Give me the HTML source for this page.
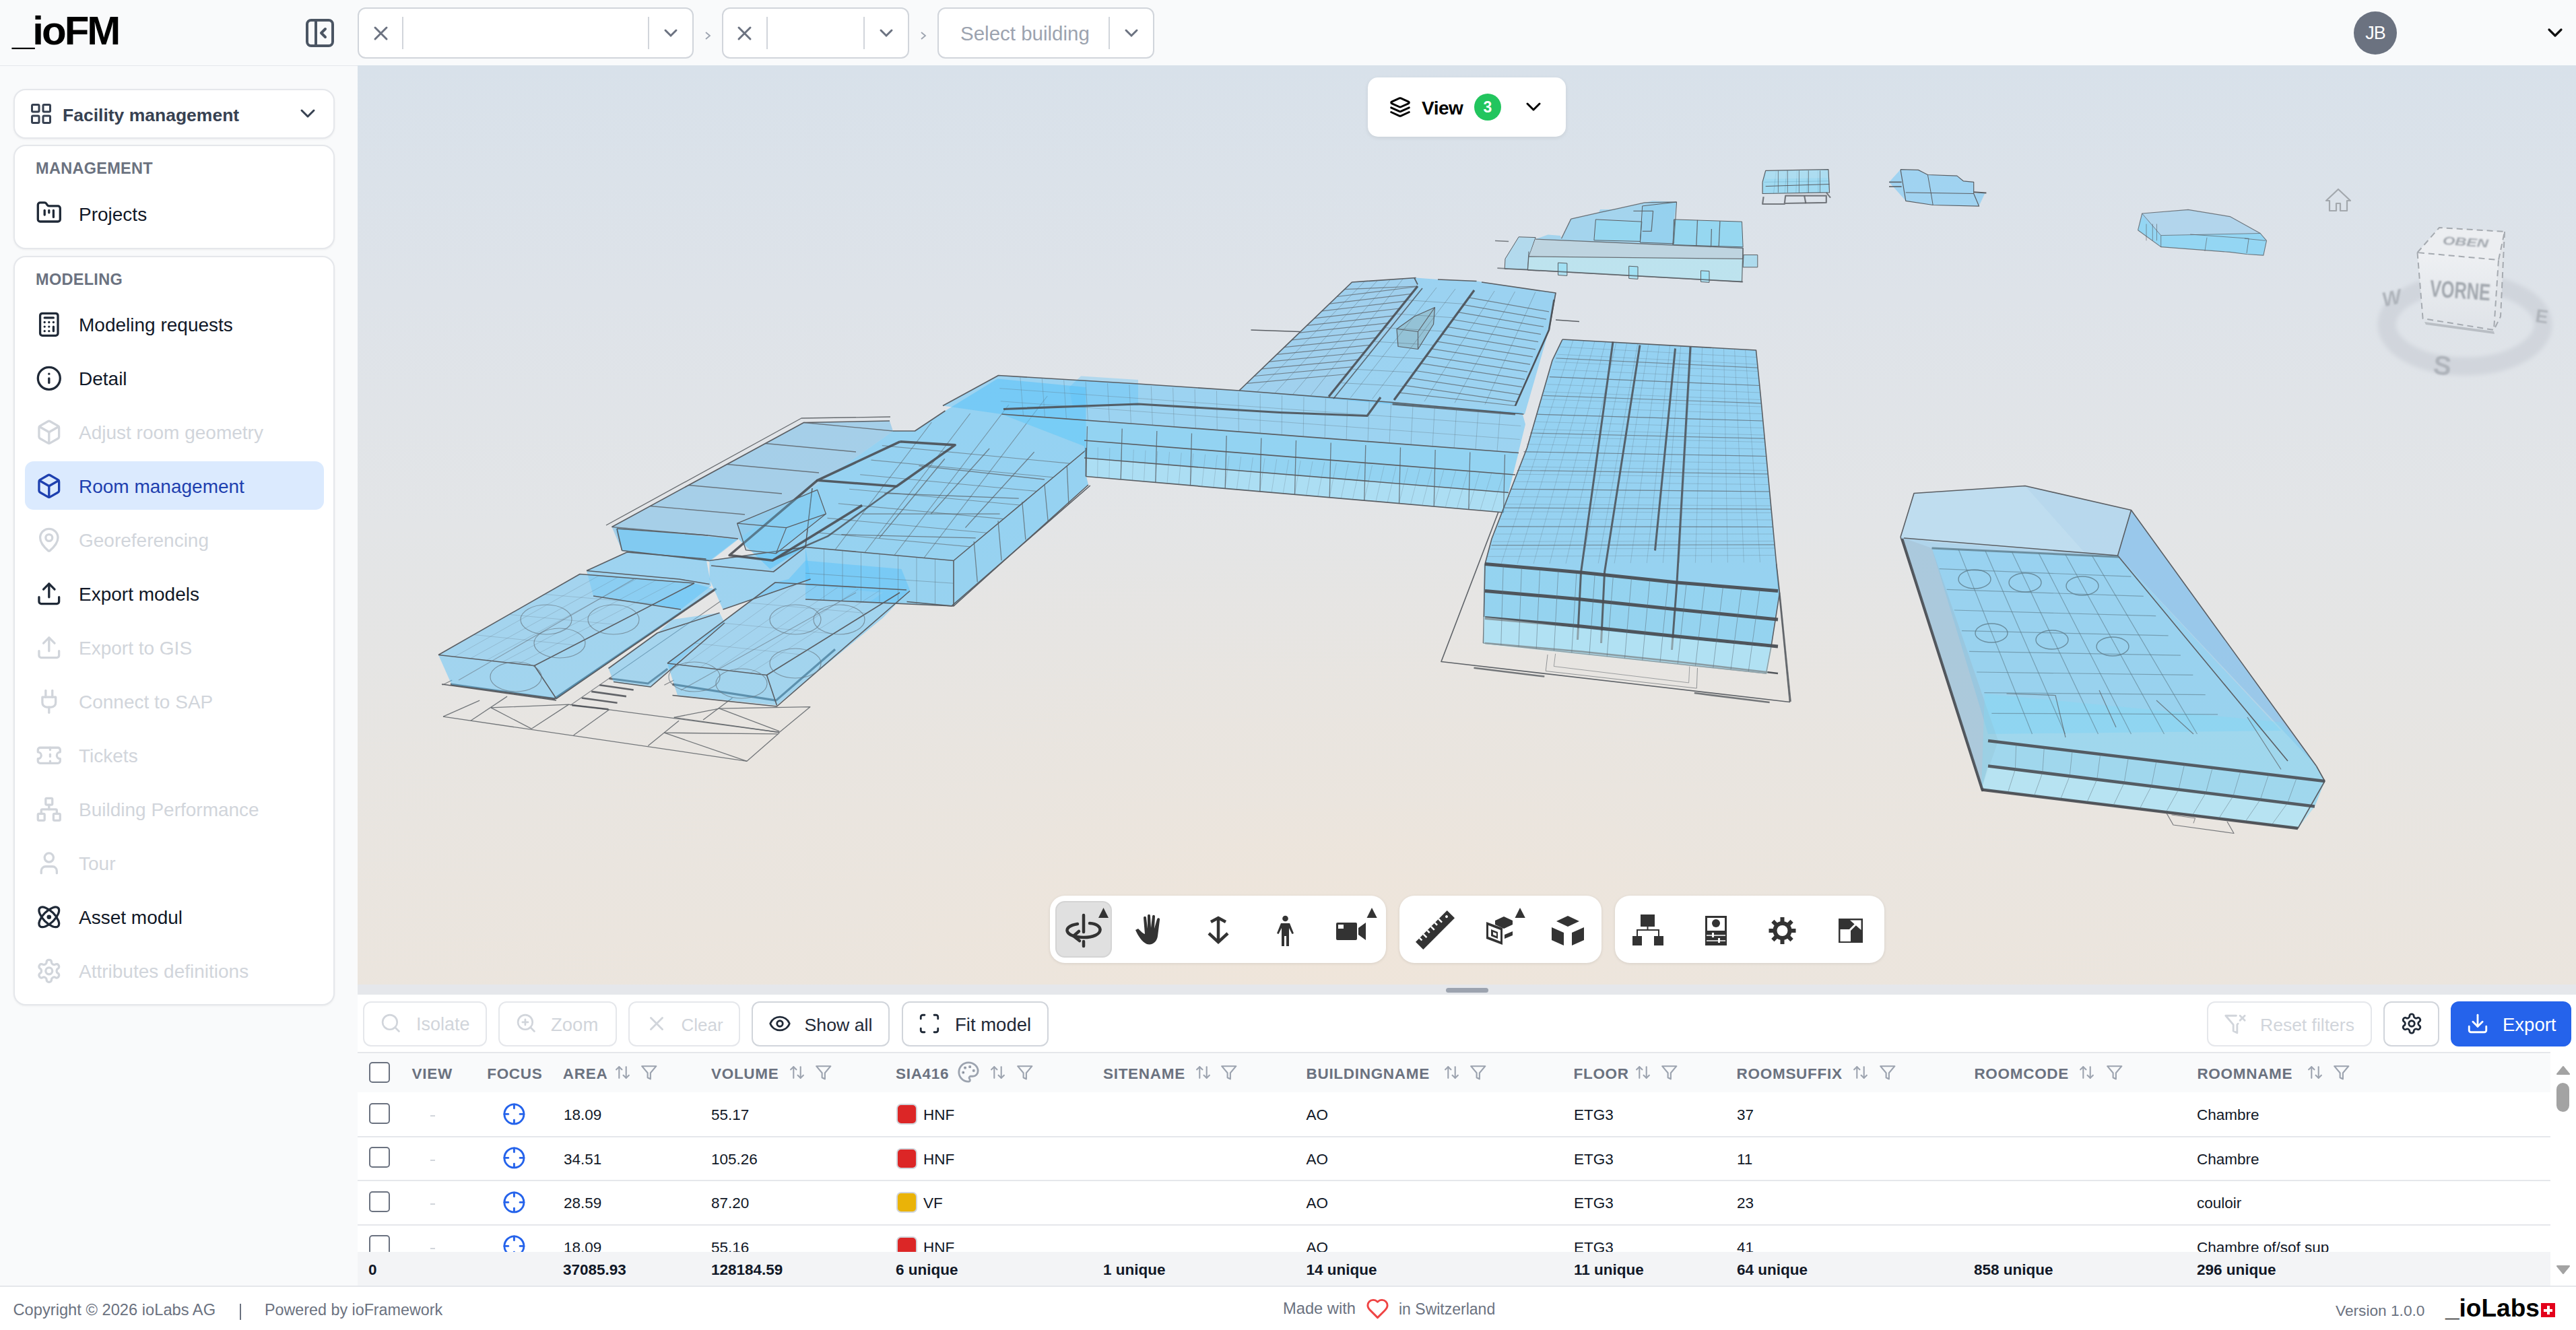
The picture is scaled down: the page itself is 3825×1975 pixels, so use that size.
<!DOCTYPE html>
<html><head><meta charset="utf-8">
<style>
*{box-sizing:border-box;margin:0;padding:0}
html,body{width:3825px;height:1975px;overflow:hidden;background:#f9fafb;font-family:"Liberation Sans",sans-serif;color:#111827}
.abs{position:absolute}
#hdr{left:0;top:0;width:3825px;height:99px;background:#f9fafb;border-bottom:2px solid #e5e7eb}
#logo{left:18px;top:16px;font-weight:700;font-size:60px;letter-spacing:-3px;color:#000;line-height:1}
.sel{position:absolute;top:11px;height:76px;background:#fff;border:2px solid #d1d5db;border-radius:12px}
.sel .x{position:absolute;top:0;height:71px;width:64px}
.sel .dv{position:absolute;top:16px;width:2px;height:40px;background:#d1d5db}
.crumb{position:absolute;top:28px;color:#9ca3af;font-size:30px}
#side{left:0;top:98px;width:531px;height:1811px;background:#f9fafb}
.card{position:absolute;left:20px;width:477px;background:#fff;border:2px solid #e5e7eb;border-radius:18px;box-shadow:0 1px 3px rgba(0,0,0,.06)}
.lbl{position:absolute;left:53px;font-size:23.5px;font-weight:700;color:#6b7280;letter-spacing:0.3px;line-height:1}
.it{position:absolute;left:117px;font-size:28px;color:#111827;line-height:1;white-space:nowrap}
.it.dis{color:#d1d5db}
.ic{position:absolute;left:50px;width:40px;height:40px}
#viewer{left:531px;top:97px;width:3294px;height:1365px;overflow:hidden;
 background:radial-gradient(ellipse 1800px 700px at 1450px 1330px,#efe5da 0%,rgba(236,229,221,0.6) 40%,rgba(230,230,230,0) 100%),linear-gradient(180deg,#d8e1ea 0%,#dee3e9 25%,#e3e5e7 50%,#e7e5e2 75%,#ebe5de 100%)}
#split{left:531px;top:1462px;width:3294px;height:15px;background:#e5e7eb}
#tbl{left:531px;top:1477px;width:3294px;height:432px;background:#fff}
#foot{left:0;top:1909px;width:3825px;height:66px;background:#fff;border-top:2px solid #e5e7eb}
.ft{position:absolute;top:20px;font-size:24px;color:#6b7280;line-height:1;white-space:nowrap}
</style></head><body>
<div id="hdr" class="abs">
 <div id="logo" class="abs">_ioFM</div>
 <svg class="abs" style="left:450px;top:24px" width="50" height="50" viewBox="0 0 50 50"><rect x="6" y="6" width="38" height="38" rx="6" fill="none" stroke="#4b5563" stroke-width="4"/><line x1="19" y1="6" x2="19" y2="44" stroke="#4b5563" stroke-width="4"/><path d="M33 19 L27 25 L33 31" fill="none" stroke="#4b5563" stroke-width="4" stroke-linecap="round" stroke-linejoin="round"/></svg>
 <div class="sel" style="left:531px;width:499px"></div>
 <div class="sel" style="left:1072px;width:278px"></div>
 <div class="sel" style="left:1392px;width:322px"></div>
 <svg class="abs" style="left:0;top:0" width="1800" height="97" viewBox="0 0 1800 97">
  <g stroke="#6b7280" stroke-width="3" stroke-linecap="round" fill="none">
   <path d="M557 41 L574 58 M574 41 L557 58"/>
   <path d="M1097 41 L1114 58 M1114 41 L1097 58"/>
   <path d="M988 45 L996 53 L1004 45"/>
   <path d="M1308 45 L1316 53 L1324 45"/>
   <path d="M1672 45 L1680 53 L1688 45"/>
  </g>
  <g fill="#d1d5db"><rect x="597" y="25" width="2" height="48"/><rect x="962" y="25" width="2" height="48"/><rect x="1138" y="25" width="2" height="48"/><rect x="1282" y="25" width="2" height="48"/><rect x="1646" y="25" width="2" height="48"/></g>
  <g stroke="#9ca3af" stroke-width="1.8" fill="none"><path d="M1048 48 L1054 53 L1048 58"/><path d="M1368 48 L1374 53 L1368 58"/></g>
 </svg>
 <div class="abs" style="left:1426px;top:35px;font-size:29.5px;color:#9ca3af;line-height:1;white-space:nowrap">Select building</div>
 <div class="abs" style="left:3495px;top:17px;width:64px;height:64px;border-radius:50%;background:#6b7280;color:#fff;font-size:27px;line-height:64px;text-align:center;letter-spacing:-1px">JB</div>
 <svg class="abs" style="left:3780px;top:40px" width="30" height="20" viewBox="0 0 30 20"><path d="M5 4 L14 13 L23 4" fill="none" stroke="#111" stroke-width="3.2" stroke-linecap="round" stroke-linejoin="round"/></svg>
</div>
<div id="side" class="abs">
<div class="card" style="top:34px;height:74px"></div>
<div class="card" style="top:117px;height:155px"></div>
<div class="card" style="top:282px;height:1113px"></div>
<div class="abs" style="left:37px;top:587px;width:444px;height:72px;border-radius:13px;background:#dbeafe"></div>
<svg class="abs" style="left:43.0px;top:53.0px" width="36" height="36" viewBox="0 0 24 24" fill="none" stroke="#374151" stroke-width="2" stroke-linecap="round" stroke-linejoin="round"><rect x="3" y="3" width="7" height="7" rx="1"/><rect x="14" y="3" width="7" height="7" rx="1"/><rect x="14" y="14" width="7" height="7" rx="1"/><rect x="3" y="14" width="7" height="7" rx="1"/></svg>
<div class="abs" style="left:93px;top:59.6px;font-size:26.5px;font-weight:700;color:#374151;line-height:1;white-space:nowrap">Facility management</div>
<svg class="abs" style="left:444px;top:59px" width="26" height="24" viewBox="0 0 26 24"><path d="M4 7 L13 16 L22 7" fill="none" stroke="#374151" stroke-width="3" stroke-linecap="round" stroke-linejoin="round"/></svg>
<div class="lbl" style="top:141.2px">MANAGEMENT</div>
<div class="lbl" style="top:305.6px">MODELING</div>
<svg class="abs" style="left:53.2px;top:198.2px" width="39.6" height="39.6" viewBox="0 0 24 24" fill="none" stroke="#1f2937" stroke-width="2" stroke-linecap="round" stroke-linejoin="round"><path d="M4 20h16a2 2 0 0 0 2-2V8a2 2 0 0 0-2-2h-7.93a2 2 0 0 1-1.66-.9l-.82-1.2A2 2 0 0 0 7.93 3H4a2 2 0 0 0-2 2v13c0 1.1.9 2 2 2Z"/><path d="M8 10v4"/><path d="M12 10v2"/><path d="M16 10v6"/></svg>
<div class="it" style="top:206.6px">Projects</div>
<svg class="abs" style="left:53.2px;top:363.5px" width="39.6" height="39.6" viewBox="0 0 24 24" fill="none" stroke="#1f2937" stroke-width="2" stroke-linecap="round" stroke-linejoin="round"><rect width="16" height="20" x="4" y="2" rx="2"/><line x1="8" x2="16" y1="6" y2="6"/><line x1="16" x2="16" y1="14" y2="18"/><path d="M16 10h.01"/><path d="M12 10h.01"/><path d="M8 10h.01"/><path d="M12 14h.01"/><path d="M8 14h.01"/><path d="M12 18h.01"/><path d="M8 18h.01"/></svg>
<div class="it" style="top:370.6px;color:#111827">Modeling requests</div>
<svg class="abs" style="left:53.2px;top:443.5px" width="39.6" height="39.6" viewBox="0 0 24 24" fill="none" stroke="#1f2937" stroke-width="2" stroke-linecap="round" stroke-linejoin="round"><circle cx="12" cy="12" r="10"/><path d="M12 16v-4"/><path d="M12 8h.01"/></svg>
<div class="it" style="top:450.6px;color:#111827">Detail</div>
<svg class="abs" style="left:53.2px;top:523.5px" width="39.6" height="39.6" viewBox="0 0 24 24" fill="none" stroke="#d1d5db" stroke-width="2" stroke-linecap="round" stroke-linejoin="round"><path d="M21 8a2 2 0 0 0-1-1.73l-7-4a2 2 0 0 0-2 0l-7 4A2 2 0 0 0 3 8v8a2 2 0 0 0 1 1.73l7 4a2 2 0 0 0 2 0l7-4A2 2 0 0 0 21 16Z"/><path d="m3.3 7 8.7 5 8.7-5"/><path d="M12 22V12"/></svg>
<div class="it" style="top:530.6px;color:#d1d5db">Adjust room geometry</div>
<svg class="abs" style="left:53.2px;top:603.5px" width="39.6" height="39.6" viewBox="0 0 24 24" fill="none" stroke="#1e40af" stroke-width="2" stroke-linecap="round" stroke-linejoin="round"><path d="M21 8a2 2 0 0 0-1-1.73l-7-4a2 2 0 0 0-2 0l-7 4A2 2 0 0 0 3 8v8a2 2 0 0 0 1 1.73l7 4a2 2 0 0 0 2 0l7-4A2 2 0 0 0 21 16Z"/><path d="m3.3 7 8.7 5 8.7-5"/><path d="M12 22V12"/></svg>
<div class="it" style="top:610.6px;color:#1e40af">Room management</div>
<svg class="abs" style="left:53.2px;top:683.5px" width="39.6" height="39.6" viewBox="0 0 24 24" fill="none" stroke="#d1d5db" stroke-width="2" stroke-linecap="round" stroke-linejoin="round"><path d="M20 10c0 4.993-5.539 10.193-7.399 11.799a1 1 0 0 1-1.202 0C9.539 20.193 4 14.993 4 10a8 8 0 0 1 16 0"/><circle cx="12" cy="10" r="3"/></svg>
<div class="it" style="top:690.6px;color:#d1d5db">Georeferencing</div>
<svg class="abs" style="left:53.2px;top:763.5px" width="39.6" height="39.6" viewBox="0 0 24 24" fill="none" stroke="#1f2937" stroke-width="2" stroke-linecap="round" stroke-linejoin="round"><path d="M21 15v4a2 2 0 0 1-2 2H5a2 2 0 0 1-2-2v-4"/><polyline points="17 8 12 3 7 8"/><line x1="12" x2="12" y1="3" y2="15"/></svg>
<div class="it" style="top:770.6px;color:#111827">Export models</div>
<svg class="abs" style="left:53.2px;top:843.5px" width="39.6" height="39.6" viewBox="0 0 24 24" fill="none" stroke="#d1d5db" stroke-width="2" stroke-linecap="round" stroke-linejoin="round"><path d="M21 15v4a2 2 0 0 1-2 2H5a2 2 0 0 1-2-2v-4"/><polyline points="17 8 12 3 7 8"/><line x1="12" x2="12" y1="3" y2="15"/></svg>
<div class="it" style="top:850.6px;color:#d1d5db">Export to GIS</div>
<svg class="abs" style="left:53.2px;top:923.5px" width="39.6" height="39.6" viewBox="0 0 24 24" fill="none" stroke="#d1d5db" stroke-width="2" stroke-linecap="round" stroke-linejoin="round"><path d="M12 22v-5"/><path d="M9 8V2"/><path d="M15 8V2"/><path d="M18 8v5a4 4 0 0 1-4 4h-4a4 4 0 0 1-4-4V8Z"/></svg>
<div class="it" style="top:930.6px;color:#d1d5db">Connect to SAP</div>
<svg class="abs" style="left:53.2px;top:1003.5px" width="39.6" height="39.6" viewBox="0 0 24 24" fill="none" stroke="#d1d5db" stroke-width="2" stroke-linecap="round" stroke-linejoin="round"><path d="M2 9a3 3 0 0 1 0 6v2a2 2 0 0 0 2 2h16a2 2 0 0 0 2-2v-2a3 3 0 0 1 0-6V7a2 2 0 0 0-2-2H4a2 2 0 0 0-2 2Z"/><path d="M13 5v2"/><path d="M13 17v2"/><path d="M13 11v2"/></svg>
<div class="it" style="top:1010.6px;color:#d1d5db">Tickets</div>
<svg class="abs" style="left:53.2px;top:1083.5px" width="39.6" height="39.6" viewBox="0 0 24 24" fill="none" stroke="#d1d5db" stroke-width="2" stroke-linecap="round" stroke-linejoin="round"><rect x="16" y="16" width="6" height="6" rx="1"/><rect x="2" y="16" width="6" height="6" rx="1"/><rect x="9" y="2" width="6" height="6" rx="1"/><path d="M5 16v-3a1 1 0 0 1 1-1h12a1 1 0 0 1 1 1v3"/><path d="M12 12V8"/></svg>
<div class="it" style="top:1090.6px;color:#d1d5db">Building Performance</div>
<svg class="abs" style="left:53.2px;top:1163.5px" width="39.6" height="39.6" viewBox="0 0 24 24" fill="none" stroke="#d1d5db" stroke-width="2" stroke-linecap="round" stroke-linejoin="round"><path d="M19 21v-2a4 4 0 0 0-4-4H9a4 4 0 0 0-4 4v2"/><circle cx="12" cy="7" r="4"/></svg>
<div class="it" style="top:1170.6px;color:#d1d5db">Tour</div>
<svg class="abs" style="left:53.2px;top:1243.5px" width="39.6" height="39.6" viewBox="0 0 24 24" fill="none" stroke="#1f2937" stroke-width="2" stroke-linecap="round" stroke-linejoin="round"><circle cx="12" cy="12" r="1"/><path d="M20.2 20.2c2.04-2.03.02-7.36-4.5-11.9-4.54-4.52-9.87-6.54-11.9-4.5-2.04 2.03-.02 7.36 4.5 11.9 4.54 4.52 9.87 6.54 11.9 4.5Z"/><path d="M15.7 15.7c4.52-4.540 6.54-9.87 4.5-11.9-2.03-2.04-7.360-.02-11.9 4.5-4.52 4.54-6.54 9.87-4.5 11.9 2.03 2.04 7.36.02 11.9-4.5Z"/></svg>
<div class="it" style="top:1250.6px;color:#111827">Asset modul</div>
<svg class="abs" style="left:53.2px;top:1323.5px" width="39.6" height="39.6" viewBox="0 0 24 24" fill="none" stroke="#d1d5db" stroke-width="2" stroke-linecap="round" stroke-linejoin="round"><path d="M12.22 2h-.44a2 2 0 0 0-2 2v.18a2 2 0 0 1-1 1.73l-.43.25a2 2 0 0 1-2 0l-.15-.08a2 2 0 0 0-2.73.73l-.22.38a2 2 0 0 0 .73 2.730l.15.1a2 2 0 0 1 1 1.72v.51a2 2 0 0 1-1 1.74l-.15.09a2 2 0 0 0-.73 2.73l.22.38a2 2 0 0 0 2.73.73l.15-.08a2 2 0 0 1 2 0l.43.25a2 2 0 0 1 1 1.73V20a2 2 0 0 0 2 2h.44a2 2 0 0 0 2-2v-.18a2 2 0 0 1 1-1.73l.43-.25a2 2 0 0 1 2 0l.15.08a2 2 0 0 0 2.73-.73l.22-.39a2 2 0 0 0-.73-2.73l-.15-.08a2 2 0 0 1-1-1.74v-.5a2 2 0 0 1 1-1.74l.15-.09a2 2 0 0 0 .73-2.73l-.22-.38a2 2 0 0 0-2.73-.73l-.15.08a2 2 0 0 1-2 0l-.43-.25a2 2 0 0 1-1-1.73V4a2 2 0 0 0-2-2z"/><circle cx="12" cy="12" r="3"/></svg>
<div class="it" style="top:1330.6px;color:#d1d5db">Attributes definitions</div>
</div>
<div id="viewer" class="abs"></div>
<!--SCENE--><div class="abs" style="left:531px;top:97px;width:3294px;height:1365px;overflow:hidden"><div class="abs" style="left:-531px;top:-97px;width:3825px;height:1975px"><svg class="abs" style="left:0;top:0" width="3825" height="1975" viewBox="0 0 3825 1975"><polyline points="658.0,1064.2 1109.1,1130.3 1157.2,1088.2" fill="none" stroke="#666a6f" stroke-width="1.3" stroke-opacity="0.9" stroke-linejoin="round"/>
<polyline points="658.0,1064.2 712.2,1040.1" fill="none" stroke="#666a6f" stroke-width="1.3" stroke-opacity="0.9" stroke-linejoin="round"/>
<polyline points="698.9,1070.2 753.1,1034.1" fill="none" stroke="#666a6f" stroke-width="1.3" stroke-opacity="0.9" stroke-linejoin="round"/>
<polyline points="729.0,1050.9 844.5,1046.1 904.6,1053.8 1157.2,1087.5" fill="none" stroke="#666a6f" stroke-width="1.3" stroke-opacity="0.9" stroke-linejoin="round"/>
<polyline points="789.1,1082.2 844.5,1046.1" fill="none" stroke="#666a6f" stroke-width="1.3" stroke-opacity="0.9" stroke-linejoin="round"/>
<polyline points="851.7,1091.8 904.6,1053.8" fill="none" stroke="#666a6f" stroke-width="1.3" stroke-opacity="0.9" stroke-linejoin="round"/>
<polyline points="962.3,1107.5 1008.1,1070.2" fill="none" stroke="#666a6f" stroke-width="1.3" stroke-opacity="0.9" stroke-linejoin="round"/>
<polyline points="729.0,1050.9 789.1,1082.2" fill="none" stroke="#666a6f" stroke-width="1.3" stroke-opacity="0.9" stroke-linejoin="round"/>
<polyline points="986.4,1088.2 1109.1,1130.3" fill="none" stroke="#666a6f" stroke-width="1.3" stroke-opacity="0.9" stroke-linejoin="round"/>
<polyline points="986.4,1088.2 1154.8,1089.9" fill="none" stroke="#666a6f" stroke-width="1.3" stroke-opacity="0.9" stroke-linejoin="round"/>
<polyline points="1000.8,1065.4 1068.2,1052.1 1202.9,1049.7 1157.2,1087.5" fill="none" stroke="#666a6f" stroke-width="1.3" stroke-opacity="0.9" stroke-linejoin="round"/>
<polyline points="1068.2,1052.1 1157.2,1085.8" fill="none" stroke="#666a6f" stroke-width="1.3" stroke-opacity="0.9" stroke-linejoin="round"/>
<polyline points="1000.8,1065.4 1157.2,1087.5" fill="none" stroke="#666a6f" stroke-width="1.3" stroke-opacity="0.9" stroke-linejoin="round"/>
<polyline points="1044.1,1069.0 1087.4,1036.5" fill="none" stroke="#666a6f" stroke-width="1.3" stroke-opacity="0.9" stroke-linejoin="round"/>
<polyline points="864.9,1036.5 864.9,1036.5" fill="none" stroke="#666a6f" stroke-width="0.1" stroke-opacity="0.0" stroke-linejoin="round"/>
<polyline points="864.9,1036.5 864.9,1036.5" fill="none" stroke="#666a6f" stroke-width="0.1" stroke-opacity="0.0" stroke-linejoin="round"/>
<polyline points="864.9,1036.5 864.9,1036.5" fill="none" stroke="#666a6f" stroke-width="0.1" stroke-opacity="0.0" stroke-linejoin="round"/>
<polyline points="864.9,1036.5 864.9,1036.5" fill="none" stroke="#666a6f" stroke-width="0.1" stroke-opacity="0.0" stroke-linejoin="round"/>
<polyline points="890.2,1017.3 940.7,1024.5" fill="none" stroke="#4a4e53" stroke-width="2.6" stroke-opacity="0.85" stroke-linejoin="round"/>
<polyline points="878.2,1026.9 929.9,1034.1" fill="none" stroke="#4a4e53" stroke-width="2.6" stroke-opacity="0.85" stroke-linejoin="round"/>
<polyline points="863.7,1036.5 916.6,1043.7" fill="none" stroke="#4a4e53" stroke-width="2.6" stroke-opacity="0.85" stroke-linejoin="round"/>
<polyline points="849.3,1047.3 903.4,1053.3" fill="none" stroke="#4a4e53" stroke-width="2.6" stroke-opacity="0.85" stroke-linejoin="round"/>
<polyline points="822.8,1037.7 1063.4,874.1" fill="none" stroke="#4a4e53" stroke-width="1.4" stroke-opacity="0.8" stroke-linejoin="round"/>
<polyline points="846.9,1047.3 1070.6,892.2" fill="none" stroke="#666a6f" stroke-width="1.1" stroke-opacity="0.8" stroke-linejoin="round"/>
<polyline points="668.9,1016.1 822.8,1037.7 1063.4,874.1" fill="none" stroke="#4a4e53" stroke-width="3.2" stroke-opacity="0.85" stroke-linejoin="round"/>
<polyline points="998.4,1016.1 1152.4,1040.1 1240.0,964.3" fill="none" stroke="#4a4e53" stroke-width="3.2" stroke-opacity="0.85" stroke-linejoin="round"/>
<polyline points="904.6,1007.6 962.3,1014.9 991.2,993.2" fill="none" stroke="#4a4e53" stroke-width="3.0" stroke-opacity="0.8" stroke-linejoin="round"/>
<polyline points="656.8,1017.3 671.3,1010.0" fill="none" stroke="#666a6f" stroke-width="1.2" stroke-opacity="0.8" stroke-linejoin="round"/>
<polyline points="986.4,1017.3 1000.8,1010.0" fill="none" stroke="#666a6f" stroke-width="1.2" stroke-opacity="0.8" stroke-linejoin="round"/>
<polyline points="2225.0,760.0 2140.0,982.5 2657.5,1042.5 2637.5,837.5" fill="none" stroke="#5f6368" stroke-width="1.6" stroke-opacity="1.0" stroke-linejoin="round"/>
<polygon points="908.5,782.5 1193.5,627.5 1321.0,625.0 1326.0,640.0 1206.0,725.0 1096.0,800.0 1053.5,832.5 923.5,817.5" fill="#74bde9" fill-opacity="0.55"/>
<polyline points="900.0,780.0 1190.0,621.0 1322.0,619.0" fill="none" stroke="#5a5e63" stroke-width="1.3" stroke-opacity="0.9" stroke-linejoin="round"/>
<polygon points="1096.0,800.0 1206.0,725.0 1326.0,640.0 1358.5,640.0 1403.5,610.0 1481.0,562.5 1612.5,575.0 1612.5,705.0 1616.0,720.0 1416.0,900.0 1196.0,890.0 1196.0,812.5 1143.5,845.0" fill="#58c2fa" fill-opacity="0.55"/>
<polygon points="1053.5,832.5 1196.0,812.5 1203.5,860.0 1146.0,880.0 1073.5,905.0 1053.5,860.0" fill="#58c2fa" fill-opacity="0.5"/>
<polygon points="913.5,784.0 1096.0,801.0 1053.5,834.0 923.5,818.5" fill="#5cc6fa" fill-opacity="0.5"/>
<polygon points="871.0,847.5 931.0,820.0 1048.5,830.0 1056.0,870.0 1011.0,905.0 881.0,885.0" fill="#58c2fa" fill-opacity="0.5"/>
<polygon points="651.0,972.5 861.0,852.5 1031.0,866.0 1061.0,875.0 826.0,1037.5 671.0,1017.5" fill="#58c2fa" fill-opacity="0.48"/>
<polygon points="651.0,972.5 861.0,852.5 1031.0,866.0 793.5,988.5" fill="#a9d3ee" fill-opacity="0.35"/>
<polygon points="903.5,992.5 976.0,940.0 998.5,920.0 1068.5,910.0 1076.0,925.0 1036.0,955.0 966.0,1020.0 911.0,1012.5" fill="#58c2fa" fill-opacity="0.45"/>
<polygon points="991.0,985.0 1151.0,865.0 1171.0,860.0 1196.0,832.5 1338.5,845.0 1351.0,876.0 1311.0,917.5 1153.5,1047.5 1006.0,1032.5" fill="#58c2fa" fill-opacity="0.48"/>
<polygon points="991.0,985.0 1151.0,865.0 1311.0,880.0 1138.5,1002.5" fill="#a9d3ee" fill-opacity="0.3"/>
<polyline points="651.0,972.5 861.0,852.5 1031.0,866.0" fill="none" stroke="#5a5e63" stroke-width="1.6" stroke-opacity="1.0" stroke-linejoin="round"/>
<polyline points="651.0,972.5 793.5,988.5 826.0,1037.5" fill="none" stroke="#5a5e63" stroke-width="1.6" stroke-opacity="1.0" stroke-linejoin="round"/>
<polyline points="671.0,1017.5 826.0,1037.5 1061.0,875.0" fill="none" stroke="#5a5e63" stroke-width="1.6" stroke-opacity="1.0" stroke-linejoin="round"/>
<polyline points="656.0,1016.0 826.0,1040.0" fill="none" stroke="#5a5e63" stroke-width="1.6" stroke-opacity="1.0" stroke-linejoin="round"/>
<polyline points="793.5,988.5 1031.0,866.0" fill="none" stroke="#5a5e63" stroke-width="1.6" stroke-opacity="1.0" stroke-linejoin="round"/>
<polyline points="991.0,985.0 1151.0,865.0 1346.0,876.0" fill="none" stroke="#5a5e63" stroke-width="1.6" stroke-opacity="1.0" stroke-linejoin="round"/>
<polyline points="991.0,985.0 1138.5,1002.5 1153.5,1047.5" fill="none" stroke="#5a5e63" stroke-width="1.6" stroke-opacity="1.0" stroke-linejoin="round"/>
<polyline points="998.5,1032.5 1153.5,1049.0 1351.0,877.5" fill="none" stroke="#5a5e63" stroke-width="1.6" stroke-opacity="1.0" stroke-linejoin="round"/>
<polyline points="1138.5,1002.5 1336.0,880.0" fill="none" stroke="#5a5e63" stroke-width="1.6" stroke-opacity="1.0" stroke-linejoin="round"/>
<polyline points="908.5,782.5 1193.5,627.5 1321.0,625.0" fill="none" stroke="#5a5e63" stroke-width="1.6" stroke-opacity="1.0" stroke-linejoin="round"/>
<polyline points="916.0,785.0 1051.0,795.0 1096.0,800.0" fill="none" stroke="#5a5e63" stroke-width="1.6" stroke-opacity="1.0" stroke-linejoin="round"/>
<polyline points="923.5,817.5 1053.5,832.5" fill="none" stroke="#5a5e63" stroke-width="1.6" stroke-opacity="1.0" stroke-linejoin="round"/>
<polyline points="916.0,785.0 923.5,817.5" fill="none" stroke="#5a5e63" stroke-width="1.6" stroke-opacity="1.0" stroke-linejoin="round"/>
<polyline points="871.0,847.5 931.0,820.0 1048.5,830.0" fill="none" stroke="#5a5e63" stroke-width="1.6" stroke-opacity="1.0" stroke-linejoin="round"/>
<polyline points="871.0,847.5 1008.5,860.0 1053.5,867.5" fill="none" stroke="#5a5e63" stroke-width="1.6" stroke-opacity="1.0" stroke-linejoin="round"/>
<polyline points="881.0,885.0 1011.0,905.0" fill="none" stroke="#5a5e63" stroke-width="1.6" stroke-opacity="1.0" stroke-linejoin="round"/>
<polyline points="903.5,992.5 976.0,940.0 1068.5,910.0" fill="none" stroke="#5a5e63" stroke-width="1.6" stroke-opacity="1.0" stroke-linejoin="round"/>
<polyline points="911.0,1012.5 966.0,1020.0 1076.0,925.0" fill="none" stroke="#5a5e63" stroke-width="1.6" stroke-opacity="1.0" stroke-linejoin="round"/>
<polyline points="1053.5,832.5 1196.0,812.5" fill="none" stroke="#5a5e63" stroke-width="1.6" stroke-opacity="1.0" stroke-linejoin="round"/>
<polyline points="1056.0,840.0 1148.5,849.0 1196.0,812.5" fill="none" stroke="#5a5e63" stroke-width="1.6" stroke-opacity="1.0" stroke-linejoin="round"/>
<polyline points="1073.5,905.0 1146.0,880.0 1203.5,860.0" fill="none" stroke="#5a5e63" stroke-width="1.6" stroke-opacity="1.0" stroke-linejoin="round"/>
<polyline points="1196.0,890.0 1416.0,900.0 1616.0,720.0" fill="none" stroke="#5a5e63" stroke-width="1.6" stroke-opacity="1.0" stroke-linejoin="round"/>
<polyline points="1196.0,812.5 1416.0,832.5 1613.5,667.5" fill="none" stroke="#5a5e63" stroke-width="1.6" stroke-opacity="1.0" stroke-linejoin="round"/>
<polyline points="1416.0,832.5 1416.0,900.0" fill="none" stroke="#5a5e63" stroke-width="1.6" stroke-opacity="1.0" stroke-linejoin="round"/>
<polyline points="1326.0,640.0 1358.5,640.0 1403.5,610.0" fill="none" stroke="#5a5e63" stroke-width="1.6" stroke-opacity="1.0" stroke-linejoin="round"/>
<polyline points="1196.0,812.5 1206.0,725.0" fill="none" stroke="#5a5e63" stroke-width="1.6" stroke-opacity="1.0" stroke-linejoin="round"/>
<polyline points="908.5,782.5 1051.0,795.0" fill="none" stroke="#5a5e63" stroke-width="1.3" stroke-opacity="0.8" stroke-linejoin="round"/>
<polyline points="965.5,751.5 1106.0,764.0" fill="none" stroke="#5a5e63" stroke-width="1.3" stroke-opacity="0.8" stroke-linejoin="round"/>
<polyline points="1022.5,720.5 1161.0,733.0" fill="none" stroke="#5a5e63" stroke-width="1.3" stroke-opacity="0.8" stroke-linejoin="round"/>
<polyline points="1079.5,689.5 1216.0,702.0" fill="none" stroke="#5a5e63" stroke-width="1.3" stroke-opacity="0.8" stroke-linejoin="round"/>
<polyline points="1136.5,658.5 1271.0,671.0" fill="none" stroke="#5a5e63" stroke-width="1.3" stroke-opacity="0.8" stroke-linejoin="round"/>
<polyline points="1193.5,627.5 1326.0,640.0" fill="none" stroke="#5a5e63" stroke-width="1.3" stroke-opacity="0.8" stroke-linejoin="round"/>
<polyline points="1212.2,790.9 1440.6,811.9" fill="none" stroke="#5a5e63" stroke-width="1.1" stroke-opacity="0.55" stroke-linejoin="round"/>
<polyline points="1228.5,769.4 1465.1,791.2" fill="none" stroke="#5a5e63" stroke-width="1.1" stroke-opacity="0.55" stroke-linejoin="round"/>
<polyline points="1244.8,747.8 1489.7,770.6" fill="none" stroke="#5a5e63" stroke-width="1.1" stroke-opacity="0.55" stroke-linejoin="round"/>
<polyline points="1261.0,726.2 1514.2,750.0" fill="none" stroke="#5a5e63" stroke-width="1.1" stroke-opacity="0.55" stroke-linejoin="round"/>
<polyline points="1277.2,704.7 1538.8,729.4" fill="none" stroke="#5a5e63" stroke-width="1.1" stroke-opacity="0.55" stroke-linejoin="round"/>
<polyline points="1293.5,683.1 1563.4,708.8" fill="none" stroke="#5a5e63" stroke-width="1.1" stroke-opacity="0.55" stroke-linejoin="round"/>
<polyline points="1309.8,661.6 1587.9,688.1" fill="none" stroke="#5a5e63" stroke-width="1.1" stroke-opacity="0.55" stroke-linejoin="round"/>
<polyline points="1240.0,816.5 1383.3,627.0" fill="none" stroke="#5a5e63" stroke-width="1.1" stroke-opacity="0.55" stroke-linejoin="round"/>
<polyline points="1284.0,820.5 1440.6,614.0" fill="none" stroke="#5a5e63" stroke-width="1.1" stroke-opacity="0.55" stroke-linejoin="round"/>
<polyline points="1328.0,824.5 1497.9,601.0" fill="none" stroke="#5a5e63" stroke-width="1.1" stroke-opacity="0.55" stroke-linejoin="round"/>
<polyline points="1372.0,828.5 1555.2,588.0" fill="none" stroke="#5a5e63" stroke-width="1.1" stroke-opacity="0.55" stroke-linejoin="round"/>
<ellipse cx="811.0" cy="920.0" rx="38" ry="22" fill="none" stroke="#6a7a86" stroke-width="1.2" stroke-opacity="0.7"/>
<ellipse cx="831.0" cy="955.0" rx="38" ry="22" fill="none" stroke="#6a7a86" stroke-width="1.2" stroke-opacity="0.7"/>
<ellipse cx="766.0" cy="1005.0" rx="38" ry="22" fill="none" stroke="#6a7a86" stroke-width="1.2" stroke-opacity="0.7"/>
<ellipse cx="1181.0" cy="920.0" rx="38" ry="22" fill="none" stroke="#6a7a86" stroke-width="1.2" stroke-opacity="0.7"/>
<ellipse cx="1246.0" cy="920.0" rx="38" ry="22" fill="none" stroke="#6a7a86" stroke-width="1.2" stroke-opacity="0.7"/>
<ellipse cx="1101.0" cy="1015.0" rx="38" ry="22" fill="none" stroke="#6a7a86" stroke-width="1.2" stroke-opacity="0.7"/>
<ellipse cx="1181.0" cy="985.0" rx="38" ry="22" fill="none" stroke="#6a7a86" stroke-width="1.2" stroke-opacity="0.7"/>
<ellipse cx="1031.0" cy="1005.0" rx="38" ry="22" fill="none" stroke="#6a7a86" stroke-width="1.2" stroke-opacity="0.7"/>
<ellipse cx="911.0" cy="920.0" rx="38" ry="22" fill="none" stroke="#6a7a86" stroke-width="1.2" stroke-opacity="0.7"/>
<polyline points="681.0,1010.0 941.0,860.0" fill="none" stroke="#6a7a86" stroke-width="1.2" stroke-opacity="0.6" stroke-linejoin="round"/>
<polyline points="1011.0,1025.0 1271.0,880.0" fill="none" stroke="#6a7a86" stroke-width="1.2" stroke-opacity="0.6" stroke-linejoin="round"/>
<polyline points="1336.3,655.8 1418.1,660.9 1331.2,722.2 1213.6,713.3 1336.3,655.8" fill="none" stroke="#4a4e53" stroke-width="3.6" stroke-opacity="0.9" stroke-linejoin="round"/>
<polyline points="1213.6,713.3 1083.2,824.5 1147.1,832.2 1280.1,750.4" fill="none" stroke="#4a4e53" stroke-width="3.6" stroke-opacity="0.9" stroke-linejoin="round"/>
<polyline points="1331.2,722.2 1228.9,796.4 1147.1,832.2" fill="none" stroke="#4a4e53" stroke-width="2.5" stroke-opacity="0.8" stroke-linejoin="round"/>
<polygon points="1094.7,777.2 1213.6,727.4 1226.4,763.1 1152.2,821.9 1107.5,816.8" fill="#66c8f5" fill-opacity="0.3" stroke="#5a5e63" stroke-width="1.3" stroke-linejoin="round"/>
<polyline points="1094.7,777.2 1167.6,783.6 1226.4,763.1" fill="none" stroke="#5a5e63" stroke-width="1.2" stroke-opacity="1.0" stroke-linejoin="round"/>
<polyline points="1167.6,783.6 1152.2,821.9" fill="none" stroke="#5a5e63" stroke-width="1.2" stroke-opacity="1.0" stroke-linejoin="round"/>
<polyline points="1364.4,691.6 1551.0,712.0" fill="none" stroke="#5a5e63" stroke-width="1.4" stroke-opacity="0.7" stroke-linejoin="round"/>
<polyline points="1313.3,732.5 1512.7,740.1" fill="none" stroke="#5a5e63" stroke-width="1.4" stroke-opacity="0.7" stroke-linejoin="round"/>
<polyline points="1280.1,763.1 1484.6,763.1" fill="none" stroke="#5a5e63" stroke-width="1.4" stroke-opacity="0.7" stroke-linejoin="round"/>
<polyline points="1249.4,793.8 1448.8,798.9" fill="none" stroke="#5a5e63" stroke-width="1.4" stroke-opacity="0.7" stroke-linejoin="round"/>
<polyline points="1469.2,666.0 1382.3,763.1" fill="none" stroke="#5a5e63" stroke-width="1.4" stroke-opacity="0.7" stroke-linejoin="round"/>
<polyline points="1535.7,671.1 1433.4,783.6" fill="none" stroke="#5a5e63" stroke-width="1.4" stroke-opacity="0.7" stroke-linejoin="round"/>
<polyline points="1402.8,681.3 1305.6,798.9" fill="none" stroke="#5a5e63" stroke-width="1.4" stroke-opacity="0.7" stroke-linejoin="round"/>
<polyline points="1446.2,804.0 1451.3,864.1" fill="none" stroke="#5a5e63" stroke-width="1.3" stroke-opacity="0.7" stroke-linejoin="round"/>
<polyline points="1482.0,773.4 1487.1,832.2" fill="none" stroke="#5a5e63" stroke-width="1.3" stroke-opacity="0.7" stroke-linejoin="round"/>
<polyline points="1517.8,745.3 1522.9,801.5" fill="none" stroke="#5a5e63" stroke-width="1.3" stroke-opacity="0.7" stroke-linejoin="round"/>
<polyline points="1551.0,719.7 1556.1,773.4" fill="none" stroke="#5a5e63" stroke-width="1.3" stroke-opacity="0.7" stroke-linejoin="round"/>
<polyline points="1584.3,691.6 1586.8,747.8" fill="none" stroke="#5a5e63" stroke-width="1.3" stroke-opacity="0.7" stroke-linejoin="round"/>
<polyline points="1346.5,893.5 1413.0,899.9 1618.8,721.0" fill="none" stroke="#5a5e63" stroke-width="1.6" stroke-opacity="1.0" stroke-linejoin="round"/>
<polygon points="1840.0,580.0 2007.5,419.0 2102.5,412.5 2135.0,415.0 2192.5,417.5 2310.0,435.0 2300.0,490.0 2264.0,615.0 2065.0,600.0" fill="#58c2fa" fill-opacity="0.5"/>
<polygon points="1840.0,580.0 2007.5,419.0 2102.5,412.5 2105.0,422.5 2090.0,465.0 1975.0,587.5" fill="#a9cfe8" fill-opacity="0.35"/>
<polygon points="1400.0,602.5 1482.5,557.5 1690.0,570.0 1840.0,580.0 2065.0,597.5 2260.0,612.5 2265.0,630.0 2232.5,761.0 1612.5,707.5 1610.0,662.5 1487.5,615.0" fill="#58c2fa" fill-opacity="0.5"/>
<polygon points="1487.5,615.0 2255.0,672.5 2232.5,760.0 1612.5,707.5 1610.0,662.5" fill="#7fd3f5" fill-opacity="0.3"/>
<polygon points="1587.5,575.0 1605.0,558.5 1690.0,564.0 1690.0,602.5 1592.5,602.5" fill="#58c2fa" fill-opacity="0.35"/>
<polygon points="1610.0,680.0 2240.0,731.5 2232.5,761.0 1612.5,707.5" fill="#d2f1f8" fill-opacity="0.4"/>
<polyline points="1400.0,602.5 1482.5,557.5 1690.0,570.0 1840.0,580.0 2067.5,597.5 2262.5,615.0" fill="none" stroke="#5a5e63" stroke-width="1.7" stroke-opacity="1.0" stroke-linejoin="round"/>
<polyline points="1487.5,615.0 1700.0,630.5 2255.0,672.5" fill="none" stroke="#5a5e63" stroke-width="1.7" stroke-opacity="1.0" stroke-linejoin="round"/>
<polyline points="1612.5,707.5 2232.5,761.0" fill="none" stroke="#5a5e63" stroke-width="1.7" stroke-opacity="1.0" stroke-linejoin="round"/>
<polyline points="1610.0,680.0 2240.0,731.5" fill="none" stroke="#5a5e63" stroke-width="1.7" stroke-opacity="1.0" stroke-linejoin="round"/>
<polyline points="1610.0,654.0 2250.0,705.0" fill="none" stroke="#5a5e63" stroke-width="1.7" stroke-opacity="1.0" stroke-linejoin="round"/>
<polyline points="1612.5,665.0 1612.5,707.5" fill="none" stroke="#5a5e63" stroke-width="1.7" stroke-opacity="1.0" stroke-linejoin="round"/>
<polyline points="1840.0,580.0 2007.5,419.0 2102.5,412.5" fill="none" stroke="#5a5e63" stroke-width="1.7" stroke-opacity="1.0" stroke-linejoin="round"/>
<polyline points="2135.0,415.0 2192.5,417.5" fill="none" stroke="#5a5e63" stroke-width="1.7" stroke-opacity="1.0" stroke-linejoin="round"/>
<polyline points="2200.0,419.0 2310.0,435.0 2300.0,490.0 2250.0,602.5" fill="none" stroke="#5a5e63" stroke-width="1.7" stroke-opacity="1.0" stroke-linejoin="round"/>
<polyline points="2100.0,412.5 2105.0,422.5" fill="none" stroke="#5a5e63" stroke-width="1.7" stroke-opacity="1.0" stroke-linejoin="round"/>
<polyline points="1857.5,490.0 1930.0,492.5" fill="none" stroke="#5a5e63" stroke-width="1.7" stroke-opacity="1.0" stroke-linejoin="round"/>
<polyline points="2310.0,475.0 2345.0,477.5" fill="none" stroke="#5a5e63" stroke-width="1.7" stroke-opacity="1.0" stroke-linejoin="round"/>
<polyline points="1614.5,633.0 1612.5,707.5" fill="none" stroke="#5a5e63" stroke-width="1.3" stroke-opacity="0.75" stroke-linejoin="round"/>
<polyline points="1666.2,636.5 1664.2,712.0" fill="none" stroke="#5a5e63" stroke-width="1.3" stroke-opacity="0.75" stroke-linejoin="round"/>
<polyline points="1717.8,640.0 1715.8,716.4" fill="none" stroke="#5a5e63" stroke-width="1.3" stroke-opacity="0.75" stroke-linejoin="round"/>
<polyline points="1769.5,643.5 1767.5,720.9" fill="none" stroke="#5a5e63" stroke-width="1.3" stroke-opacity="0.75" stroke-linejoin="round"/>
<polyline points="1821.2,647.0 1819.2,725.3" fill="none" stroke="#5a5e63" stroke-width="1.3" stroke-opacity="0.75" stroke-linejoin="round"/>
<polyline points="1872.8,650.5 1870.8,729.8" fill="none" stroke="#5a5e63" stroke-width="1.3" stroke-opacity="0.75" stroke-linejoin="round"/>
<polyline points="1924.5,654.0 1922.5,734.2" fill="none" stroke="#5a5e63" stroke-width="1.3" stroke-opacity="0.75" stroke-linejoin="round"/>
<polyline points="1976.2,657.5 1974.2,738.7" fill="none" stroke="#5a5e63" stroke-width="1.3" stroke-opacity="0.75" stroke-linejoin="round"/>
<polyline points="2027.8,661.0 2025.8,743.2" fill="none" stroke="#5a5e63" stroke-width="1.3" stroke-opacity="0.75" stroke-linejoin="round"/>
<polyline points="2079.5,664.5 2077.5,747.6" fill="none" stroke="#5a5e63" stroke-width="1.3" stroke-opacity="0.75" stroke-linejoin="round"/>
<polyline points="2131.2,668.0 2129.2,752.1" fill="none" stroke="#5a5e63" stroke-width="1.3" stroke-opacity="0.75" stroke-linejoin="round"/>
<polyline points="2182.8,671.5 2180.8,756.5" fill="none" stroke="#5a5e63" stroke-width="1.3" stroke-opacity="0.75" stroke-linejoin="round"/>
<polyline points="2234.5,675.0 2232.5,761.0" fill="none" stroke="#5a5e63" stroke-width="1.3" stroke-opacity="0.75" stroke-linejoin="round"/>
<polyline points="1490.0,607.5 1690.0,600.0 1900.0,612.5 2030.0,617.5 2050.0,590.0" fill="none" stroke="#4d5156" stroke-width="3.2" stroke-opacity="0.9" stroke-linejoin="round"/>
<polyline points="2067.5,600.0 2250.0,615.0" fill="none" stroke="#4d5156" stroke-width="3.0" stroke-opacity="0.8" stroke-linejoin="round"/>
<polyline points="1851.2,569.3 2000.6,555.5" fill="none" stroke="#5a5e63" stroke-width="1.2" stroke-opacity="0.7" stroke-linejoin="round"/>
<polyline points="1862.3,558.5 2009.2,544.7" fill="none" stroke="#5a5e63" stroke-width="1.2" stroke-opacity="0.7" stroke-linejoin="round"/>
<polyline points="1873.5,547.8 2017.9,533.9" fill="none" stroke="#5a5e63" stroke-width="1.2" stroke-opacity="0.7" stroke-linejoin="round"/>
<polyline points="1884.7,537.1 2026.6,523.0" fill="none" stroke="#5a5e63" stroke-width="1.2" stroke-opacity="0.7" stroke-linejoin="round"/>
<polyline points="1895.8,526.3 2035.2,512.2" fill="none" stroke="#5a5e63" stroke-width="1.2" stroke-opacity="0.7" stroke-linejoin="round"/>
<polyline points="1907.0,515.6 2043.9,501.4" fill="none" stroke="#5a5e63" stroke-width="1.2" stroke-opacity="0.7" stroke-linejoin="round"/>
<polyline points="1918.2,504.9 2052.6,490.5" fill="none" stroke="#5a5e63" stroke-width="1.2" stroke-opacity="0.7" stroke-linejoin="round"/>
<polyline points="1929.3,494.1 2061.2,479.7" fill="none" stroke="#5a5e63" stroke-width="1.2" stroke-opacity="0.7" stroke-linejoin="round"/>
<polyline points="1940.5,483.4 2069.9,468.9" fill="none" stroke="#5a5e63" stroke-width="1.2" stroke-opacity="0.7" stroke-linejoin="round"/>
<polyline points="1951.7,472.7 2078.6,458.0" fill="none" stroke="#5a5e63" stroke-width="1.2" stroke-opacity="0.7" stroke-linejoin="round"/>
<polyline points="1962.8,461.9 2087.2,447.2" fill="none" stroke="#5a5e63" stroke-width="1.2" stroke-opacity="0.7" stroke-linejoin="round"/>
<polyline points="1974.0,451.2 2095.9,436.4" fill="none" stroke="#5a5e63" stroke-width="1.2" stroke-opacity="0.7" stroke-linejoin="round"/>
<polyline points="1985.2,440.5 2104.6,425.5" fill="none" stroke="#5a5e63" stroke-width="1.2" stroke-opacity="0.7" stroke-linejoin="round"/>
<polyline points="1996.3,429.7 2105.0,425.0" fill="none" stroke="#5a5e63" stroke-width="1.2" stroke-opacity="0.7" stroke-linejoin="round"/>
<polyline points="2077.9,583.1 2250.0,602.5" fill="none" stroke="#5a5e63" stroke-width="1.2" stroke-opacity="0.7" stroke-linejoin="round"/>
<polyline points="2085.9,572.3 2252.0,596.9" fill="none" stroke="#5a5e63" stroke-width="1.2" stroke-opacity="0.7" stroke-linejoin="round"/>
<polyline points="2093.8,561.4 2256.0,585.8" fill="none" stroke="#5a5e63" stroke-width="1.2" stroke-opacity="0.7" stroke-linejoin="round"/>
<polyline points="2101.7,550.5 2260.0,574.6" fill="none" stroke="#5a5e63" stroke-width="1.2" stroke-opacity="0.7" stroke-linejoin="round"/>
<polyline points="2109.7,539.7 2264.0,563.4" fill="none" stroke="#5a5e63" stroke-width="1.2" stroke-opacity="0.7" stroke-linejoin="round"/>
<polyline points="2117.6,528.8 2268.0,552.2" fill="none" stroke="#5a5e63" stroke-width="1.2" stroke-opacity="0.7" stroke-linejoin="round"/>
<polyline points="2125.5,517.9 2272.0,541.1" fill="none" stroke="#5a5e63" stroke-width="1.2" stroke-opacity="0.7" stroke-linejoin="round"/>
<polyline points="2133.5,507.1 2276.0,529.9" fill="none" stroke="#5a5e63" stroke-width="1.2" stroke-opacity="0.7" stroke-linejoin="round"/>
<polyline points="2141.4,496.2 2280.0,518.8" fill="none" stroke="#5a5e63" stroke-width="1.2" stroke-opacity="0.7" stroke-linejoin="round"/>
<polyline points="2149.3,485.3 2284.0,507.6" fill="none" stroke="#5a5e63" stroke-width="1.2" stroke-opacity="0.7" stroke-linejoin="round"/>
<polyline points="2157.3,474.5 2288.0,496.4" fill="none" stroke="#5a5e63" stroke-width="1.2" stroke-opacity="0.7" stroke-linejoin="round"/>
<polyline points="2165.2,463.6 2292.0,485.2" fill="none" stroke="#5a5e63" stroke-width="1.2" stroke-opacity="0.7" stroke-linejoin="round"/>
<polyline points="2173.1,452.7 2296.0,474.1" fill="none" stroke="#5a5e63" stroke-width="1.2" stroke-opacity="0.7" stroke-linejoin="round"/>
<polyline points="2181.1,441.9 2300.0,462.9" fill="none" stroke="#5a5e63" stroke-width="1.2" stroke-opacity="0.7" stroke-linejoin="round"/>
<polyline points="1973.0,589.0 2105.0,425.0" fill="none" stroke="#4a4e53" stroke-width="3.2" stroke-opacity="0.9" stroke-linejoin="round"/>
<polyline points="1980.0,592.0 2112.0,428.0" fill="none" stroke="#4a4e53" stroke-width="1.6" stroke-opacity="0.8" stroke-linejoin="round"/>
<polyline points="2070.0,594.0 2189.0,431.0" fill="none" stroke="#4a4e53" stroke-width="3.2" stroke-opacity="0.9" stroke-linejoin="round"/>
<polyline points="2250.0,602.5 2300.0,490.0 2307.5,445.0" fill="none" stroke="#4a4e53" stroke-width="2.6" stroke-opacity="0.85" stroke-linejoin="round"/>
<polygon points="2074.0,488.5 2100.0,470.0 2130.5,456.5 2128.5,481.5 2105.5,518.5 2076.0,514.5" fill="#8fb8c4" fill-opacity="0.6" stroke="#5a5e63" stroke-width="1.2" stroke-linejoin="round"/>
<polyline points="2074.0,488.5 2105.5,492.5 2130.5,456.5" fill="none" stroke="#5a5e63" stroke-width="1.1" stroke-opacity="1.0" stroke-linejoin="round"/>
<polyline points="2105.5,492.5 2105.5,518.5" fill="none" stroke="#5a5e63" stroke-width="1.1" stroke-opacity="1.0" stroke-linejoin="round"/>
<polygon points="2318.5,354.3 2332.7,325.1 2373.6,315.9 2376.1,310.9 2397.0,310.9 2442.1,300.9 2453.7,298.3 2489.6,300.0 2485.5,325.9 2586.5,329.2 2588.1,368.5 2280.1,355.1 2298.5,348.4 2316.8,350.1" fill="#6cc6f2" fill-opacity="0.5"/>
<polygon points="2369.4,325.9 2437.9,329.2 2435.4,358.4 2366.9,356.8" fill="#7fdcf7" fill-opacity="0.35" stroke="#5a5e63" stroke-width="1.0" stroke-linejoin="round"/>
<polygon points="2438.7,305.9 2489.6,300.0 2485.5,361.8 2435.4,360.1" fill="#6cc6f2" fill-opacity="0.25" stroke="#5a5e63" stroke-width="1.0" stroke-linejoin="round"/>
<polygon points="2485.5,325.9 2586.5,329.2 2588.1,366.8 2484.6,363.5" fill="#7fdcf7" fill-opacity="0.35" stroke="#5a5e63" stroke-width="1.0" stroke-linejoin="round"/>
<polygon points="2235.0,384.3 2255.1,351.8 2280.1,352.6 2270.1,381.0 2268.4,400.2 2234.2,399.3" fill="#7fcff2" fill-opacity="0.45" stroke="#5a5e63" stroke-width="1.0" stroke-linejoin="round"/>
<polygon points="2280.1,355.1 2588.1,368.5 2588.1,384.3 2270.1,381.0" fill="#b3cfdc" fill-opacity="0.75"/>
<polygon points="2270.1,381.0 2588.1,384.3 2586.5,418.5 2268.4,401.0" fill="#a9e2f2" fill-opacity="0.6"/>
<polygon points="2589.0,378.5 2609.8,378.5 2609.8,396.8 2588.1,396.8" fill="#7fd3f2" fill-opacity="0.5" stroke="#5a5e63" stroke-width="1.0" stroke-linejoin="round"/>
<polyline points="2280.1,355.1 2588.1,368.5 2588.1,384.3" fill="none" stroke="#5a5e63" stroke-width="1.3" stroke-opacity="0.85" stroke-linejoin="round"/>
<polyline points="2270.1,381.0 2588.1,384.3" fill="none" stroke="#5a5e63" stroke-width="1.3" stroke-opacity="0.85" stroke-linejoin="round"/>
<polyline points="2268.4,401.0 2586.5,418.5 2588.1,368.5" fill="none" stroke="#5a5e63" stroke-width="1.3" stroke-opacity="0.85" stroke-linejoin="round"/>
<polyline points="2270.1,373.5 2268.4,401.0" fill="none" stroke="#5a5e63" stroke-width="1.3" stroke-opacity="0.85" stroke-linejoin="round"/>
<polyline points="2487.1,325.9 2483.8,363.5" fill="none" stroke="#5a5e63" stroke-width="1.3" stroke-opacity="0.85" stroke-linejoin="round"/>
<polyline points="2520.5,326.7 2518.8,365.1" fill="none" stroke="#5a5e63" stroke-width="1.3" stroke-opacity="0.85" stroke-linejoin="round"/>
<polyline points="2553.9,328.4 2552.2,366.0" fill="none" stroke="#5a5e63" stroke-width="1.3" stroke-opacity="0.85" stroke-linejoin="round"/>
<polyline points="2541.4,340.1 2540.6,366.0" fill="none" stroke="#5a5e63" stroke-width="1.3" stroke-opacity="0.85" stroke-linejoin="round"/>
<polyline points="2332.7,325.1 2373.6,315.9 2397.0,310.9 2442.1,300.9 2489.6,300.0" fill="none" stroke="#5a5e63" stroke-width="1.3" stroke-opacity="0.85" stroke-linejoin="round"/>
<polyline points="2425.4,313.4 2454.6,313.4 2452.1,343.4 2438.7,343.4" fill="none" stroke="#5a5e63" stroke-width="1.3" stroke-opacity="0.85" stroke-linejoin="round"/>
<polyline points="2318.5,354.3 2332.7,325.1" fill="none" stroke="#5a5e63" stroke-width="1.3" stroke-opacity="0.85" stroke-linejoin="round"/>
<polygon points="2313.5,390.2 2326.9,391.0 2326.9,409.4 2313.5,408.5" fill="#8fe0f8" fill-opacity="0.6" stroke="#5a5e63" stroke-width="1.0" stroke-linejoin="round"/>
<polygon points="2418.7,395.2 2432.0,396.0 2432.0,414.4 2418.7,413.5" fill="#8fe0f8" fill-opacity="0.6" stroke="#5a5e63" stroke-width="1.0" stroke-linejoin="round"/>
<polygon points="2525.5,401.9 2538.0,402.7 2538.0,419.4 2525.5,418.5" fill="#8fe0f8" fill-opacity="0.6" stroke="#5a5e63" stroke-width="1.0" stroke-linejoin="round"/>
<polyline points="2223.4,398.2 2588.1,418.5" fill="none" stroke="#555a5f" stroke-width="1.8" stroke-opacity="0.7" stroke-linejoin="round"/>
<polyline points="2220.0,357.6 2240.1,358.4" fill="none" stroke="#5a5e63" stroke-width="1.5" stroke-opacity="0.8" stroke-linejoin="round"/>
<polygon points="2320.0,504.0 2607.5,520.0 2615.0,595.0 2637.5,835.0 2642.5,880.0 2630.0,960.0 2622.5,1000.0 2202.5,955.0 2205.0,837.5 2215.0,800.0 2267.5,665.0 2305.0,535.0" fill="#58c2fa" fill-opacity="0.55"/>
<polygon points="2202.5,837.5 2640.0,880.0 2622.5,1000.0 2202.5,955.0" fill="#8fd8f2" fill-opacity="0.35"/>
<polyline points="2320.0,504.0 2607.5,520.0 2615.0,595.0 2637.5,835.0 2642.5,880.0" fill="none" stroke="#5a5e63" stroke-width="1.6" stroke-opacity="1.0" stroke-linejoin="round"/>
<polyline points="2320.0,504.0 2305.0,535.0 2267.5,665.0 2215.0,800.0 2205.0,837.5 2202.5,955.0" fill="none" stroke="#5a5e63" stroke-width="1.6" stroke-opacity="1.0" stroke-linejoin="round"/>
<polyline points="2202.5,955.0 2622.5,1000.0 2630.0,960.0 2642.5,880.0" fill="none" stroke="#5a5e63" stroke-width="1.6" stroke-opacity="1.0" stroke-linejoin="round"/>
<polyline points="2205.0,837.5 2347.5,850.0 2490.0,865.0 2640.0,877.5" fill="none" stroke="#4a4e53" stroke-width="5" stroke-opacity="0.95" stroke-linejoin="round"/>
<polyline points="2205.0,877.5 2347.5,890.0 2490.0,905.0 2640.0,920.0" fill="none" stroke="#4a4e53" stroke-width="5" stroke-opacity="0.95" stroke-linejoin="round"/>
<polyline points="2205.0,917.5 2347.5,930.0 2490.0,945.0 2640.0,960.0" fill="none" stroke="#4a4e53" stroke-width="5" stroke-opacity="0.95" stroke-linejoin="round"/>
<polyline points="2205.0,955.0 2347.5,967.5 2490.0,982.5 2640.0,1000.0" fill="none" stroke="#4a4e53" stroke-width="2.5" stroke-opacity="0.95" stroke-linejoin="round"/>
<polyline points="2395.0,507.5 2347.5,850.0 2342.5,950.0" fill="none" stroke="#4a4e53" stroke-width="3" stroke-opacity="0.85" stroke-linejoin="round"/>
<polyline points="2435.0,512.5 2382.5,850.0 2377.5,955.0" fill="none" stroke="#4a4e53" stroke-width="3" stroke-opacity="0.85" stroke-linejoin="round"/>
<polyline points="2510.0,515.0 2490.0,865.0 2482.5,965.0" fill="none" stroke="#4a4e53" stroke-width="3" stroke-opacity="0.85" stroke-linejoin="round"/>
<polyline points="2487.5,517.5 2457.5,817.5" fill="none" stroke="#4a4e53" stroke-width="3" stroke-opacity="0.85" stroke-linejoin="round"/>
<polyline points="2310.4,531.8 2610.0,546.2" fill="none" stroke="#5a5e63" stroke-width="1.2" stroke-opacity="0.6" stroke-linejoin="round"/>
<polyline points="2300.8,559.6 2612.5,572.5" fill="none" stroke="#5a5e63" stroke-width="1.2" stroke-opacity="0.6" stroke-linejoin="round"/>
<polyline points="2291.2,587.4 2615.0,598.8" fill="none" stroke="#5a5e63" stroke-width="1.2" stroke-opacity="0.6" stroke-linejoin="round"/>
<polyline points="2281.7,615.2 2617.5,625.0" fill="none" stroke="#5a5e63" stroke-width="1.2" stroke-opacity="0.6" stroke-linejoin="round"/>
<polyline points="2272.1,643.0 2620.0,651.2" fill="none" stroke="#5a5e63" stroke-width="1.2" stroke-opacity="0.6" stroke-linejoin="round"/>
<polyline points="2262.5,670.8 2622.5,677.5" fill="none" stroke="#5a5e63" stroke-width="1.2" stroke-opacity="0.6" stroke-linejoin="round"/>
<polyline points="2252.9,698.5 2625.0,703.8" fill="none" stroke="#5a5e63" stroke-width="1.2" stroke-opacity="0.6" stroke-linejoin="round"/>
<polyline points="2243.3,726.3 2627.5,730.0" fill="none" stroke="#5a5e63" stroke-width="1.2" stroke-opacity="0.6" stroke-linejoin="round"/>
<polyline points="2233.8,754.1 2630.0,756.2" fill="none" stroke="#5a5e63" stroke-width="1.2" stroke-opacity="0.6" stroke-linejoin="round"/>
<polyline points="2224.2,781.9 2632.5,782.5" fill="none" stroke="#5a5e63" stroke-width="1.2" stroke-opacity="0.6" stroke-linejoin="round"/>
<polyline points="2214.6,809.7 2635.0,808.8" fill="none" stroke="#5a5e63" stroke-width="1.2" stroke-opacity="0.6" stroke-linejoin="round"/>
<polygon points="2202.5,916.1 2342.3,932.4 2484.3,947.6 2631.1,961.5 2624.1,1001.1 2202.5,956.9" fill="#d2f1f8" fill-opacity="0.45"/>
<polyline points="2298.0,972.0 2295.2,996.5 2519.3,1022.1 2520.5,991.8" fill="none" stroke="#6b7075" stroke-width="1.0" stroke-opacity="0.7" stroke-linejoin="round"/>
<polyline points="2309.6,970.8 2307.3,989.5 2507.6,1013.9 2508.8,989.5" fill="none" stroke="#6b7075" stroke-width="1.0" stroke-opacity="0.6" stroke-linejoin="round"/>
<polyline points="2188.5,991.8 2293.3,1004.6" fill="none" stroke="#555a5f" stroke-width="2.5" stroke-opacity="0.8" stroke-linejoin="round"/>
<polyline points="2515.8,1029.1 2627.6,1043.1" fill="none" stroke="#555a5f" stroke-width="2.5" stroke-opacity="0.8" stroke-linejoin="round"/>
<polyline points="2642.7,880.0 2659.0,1041.9" fill="none" stroke="#555a5f" stroke-width="1.6" stroke-opacity="0.9" stroke-linejoin="round"/>
<polygon points="2822.0,797.5 2842.0,732.5 3007.0,721.5 3164.5,757.5 3439.5,1137.5 3452.0,1160.0 3437.0,1197.5 3412.0,1230.0 2942.0,1172.5" fill="#7cc3ef" fill-opacity="0.5"/>
<polygon points="2822.0,797.5 2842.0,732.5 3007.0,721.5 3164.5,757.5 3144.5,825.0 2869.5,805.0" fill="#cfe6f3" fill-opacity="0.5"/>
<polygon points="3007.0,721.5 3164.5,757.5 3144.5,825.0 3097.0,822.5" fill="#a9cde8" fill-opacity="0.3"/>
<polygon points="2868.5,814.0 3146.0,827.0 3387.0,1085.0 2952.0,1090.0" fill="#62cdfb" fill-opacity="0.3"/>
<polygon points="2822.0,797.5 2868.5,814.0 2967.0,1100.0 2942.0,1172.5" fill="#9aa9b3" fill-opacity="0.25"/>
<polygon points="3164.5,757.5 3439.5,1137.5 3144.5,825.0" fill="#6fb3ea" fill-opacity="0.35"/>
<polygon points="2947.0,1030.0 3387.0,1072.5 3439.5,1137.5 3452.0,1160.0 3437.0,1197.5 3412.0,1230.0 2942.0,1172.5" fill="#7fdcf7" fill-opacity="0.35"/>
<polygon points="2952.0,1137.5 3437.0,1197.5 3412.0,1230.0 2942.0,1172.5" fill="#d2f1f8" fill-opacity="0.45"/>
<polyline points="2822.0,797.5 2842.0,732.5 3007.0,721.5 3164.5,757.5 3439.5,1137.5" fill="none" stroke="#5a5e63" stroke-width="1.6" stroke-opacity="1.0" stroke-linejoin="round"/>
<polyline points="2827.0,799.0 3144.5,825.0 3164.5,757.5" fill="none" stroke="#5a5e63" stroke-width="1.6" stroke-opacity="1.0" stroke-linejoin="round"/>
<polyline points="3144.5,825.0 3397.0,1130.0" fill="none" stroke="#5a5e63" stroke-width="1.6" stroke-opacity="1.0" stroke-linejoin="round"/>
<polyline points="2822.0,797.5 2942.0,1172.5 3412.0,1230.0 3452.0,1160.0 3439.5,1137.5" fill="none" stroke="#5a5e63" stroke-width="1.6" stroke-opacity="1.0" stroke-linejoin="round"/>
<polyline points="2952.0,1100.0 3452.0,1160.0" fill="none" stroke="#4a4e53" stroke-width="4.5" stroke-opacity="0.9" stroke-linejoin="round"/>
<polyline points="2952.0,1137.5 3437.0,1197.5" fill="none" stroke="#4a4e53" stroke-width="4.5" stroke-opacity="0.9" stroke-linejoin="round"/>
<polyline points="2942.0,1172.5 3412.0,1230.0" fill="none" stroke="#4a4e53" stroke-width="4.5" stroke-opacity="0.9" stroke-linejoin="round"/>
<polyline points="2824.5,800.0 2944.5,1175.0" fill="none" stroke="#4a4e53" stroke-width="3.5" stroke-opacity="0.9" stroke-linejoin="round"/>
<polyline points="2908.1,815.9 3017.5,1090.0" fill="none" stroke="#5e7d8c" stroke-width="1.2" stroke-opacity="0.6" stroke-linejoin="round"/>
<polyline points="2947.8,817.7 3066.5,1090.0" fill="none" stroke="#5e7d8c" stroke-width="1.2" stroke-opacity="0.6" stroke-linejoin="round"/>
<polyline points="2987.4,819.6 3115.5,1090.0" fill="none" stroke="#5e7d8c" stroke-width="1.2" stroke-opacity="0.6" stroke-linejoin="round"/>
<polyline points="3027.1,821.4 3164.5,1090.0" fill="none" stroke="#5e7d8c" stroke-width="1.2" stroke-opacity="0.6" stroke-linejoin="round"/>
<polyline points="3066.7,823.3 3213.5,1090.0" fill="none" stroke="#5e7d8c" stroke-width="1.2" stroke-opacity="0.6" stroke-linejoin="round"/>
<polyline points="3106.4,825.1 3262.5,1090.0" fill="none" stroke="#5e7d8c" stroke-width="1.2" stroke-opacity="0.6" stroke-linejoin="round"/>
<polyline points="2879.6,844.7 3164.4,856.2" fill="none" stroke="#5e7d8c" stroke-width="1.2" stroke-opacity="0.6" stroke-linejoin="round"/>
<polyline points="2890.7,875.3 3182.8,885.4" fill="none" stroke="#5e7d8c" stroke-width="1.2" stroke-opacity="0.6" stroke-linejoin="round"/>
<polyline points="2901.8,906.0 3201.2,914.7" fill="none" stroke="#5e7d8c" stroke-width="1.2" stroke-opacity="0.6" stroke-linejoin="round"/>
<polyline points="2912.9,936.7 3219.6,943.9" fill="none" stroke="#5e7d8c" stroke-width="1.2" stroke-opacity="0.6" stroke-linejoin="round"/>
<polyline points="2924.1,967.3 3237.9,973.1" fill="none" stroke="#5e7d8c" stroke-width="1.2" stroke-opacity="0.6" stroke-linejoin="round"/>
<polyline points="2935.2,998.0 3256.3,1002.3" fill="none" stroke="#5e7d8c" stroke-width="1.2" stroke-opacity="0.6" stroke-linejoin="round"/>
<polyline points="2946.3,1028.7 3274.7,1031.6" fill="none" stroke="#5e7d8c" stroke-width="1.2" stroke-opacity="0.6" stroke-linejoin="round"/>
<polyline points="2957.4,1059.3 3293.1,1060.8" fill="none" stroke="#5e7d8c" stroke-width="1.2" stroke-opacity="0.6" stroke-linejoin="round"/>
<polyline points="2868.5,814.0 3146.0,827.0" fill="none" stroke="#5e7d8c" stroke-width="3" stroke-opacity="0.8" stroke-linejoin="round"/>
<ellipse cx="3007.0" cy="865.0" rx="24" ry="14" fill="none" stroke="#5e7d8c" stroke-width="1.4" stroke-opacity="0.8"/>
<ellipse cx="3047.0" cy="950.0" rx="24" ry="14" fill="none" stroke="#5e7d8c" stroke-width="1.4" stroke-opacity="0.8"/>
<ellipse cx="2932.0" cy="860.0" rx="24" ry="14" fill="none" stroke="#5e7d8c" stroke-width="1.4" stroke-opacity="0.8"/>
<ellipse cx="2957.0" cy="940.0" rx="24" ry="14" fill="none" stroke="#5e7d8c" stroke-width="1.4" stroke-opacity="0.8"/>
<ellipse cx="3092.0" cy="870.0" rx="24" ry="14" fill="none" stroke="#5e7d8c" stroke-width="1.4" stroke-opacity="0.8"/>
<ellipse cx="3137.0" cy="960.0" rx="24" ry="14" fill="none" stroke="#5e7d8c" stroke-width="1.4" stroke-opacity="0.8"/>
<polyline points="3217.0,1207.5 3227.0,1225.0 3317.0,1237.5 3307.0,1220.0" fill="none" stroke="#5a5e63" stroke-width="1.2" stroke-opacity="0.8" stroke-linejoin="round"/>
<polyline points="3224.5,1210.0 3259.5,1215.0 3257.0,1222.5" fill="none" stroke="#5a5e63" stroke-width="1.0" stroke-opacity="0.7" stroke-linejoin="round"/>
<polyline points="2979.5,1030.0 3052.0,1032.5 3067.0,1095.0" fill="none" stroke="#5a5e63" stroke-width="1.2" stroke-opacity="0.7" stroke-linejoin="round"/>
<polyline points="3117.0,1025.0 3142.0,1080.0" fill="none" stroke="#5a5e63" stroke-width="1.2" stroke-opacity="0.7" stroke-linejoin="round"/>
<polyline points="3202.0,1040.0 3257.0,1090.0" fill="none" stroke="#5a5e63" stroke-width="1.2" stroke-opacity="0.7" stroke-linejoin="round"/>
<polyline points="3337.0,1065.0 3387.0,1142.5" fill="none" stroke="#5a5e63" stroke-width="1.2" stroke-opacity="0.7" stroke-linejoin="round"/>
<polyline points="2336.0,504.9 2229.0,837.4" fill="none" stroke="#5a6a75" stroke-width="0.9" stroke-opacity="0.28" stroke-linejoin="round"/>
<polyline points="2351.9,505.8 2253.1,837.2" fill="none" stroke="#5a6a75" stroke-width="0.9" stroke-opacity="0.28" stroke-linejoin="round"/>
<polyline points="2367.9,506.7 2277.1,837.1" fill="none" stroke="#5a6a75" stroke-width="0.9" stroke-opacity="0.28" stroke-linejoin="round"/>
<polyline points="2383.9,507.6 2301.1,836.9" fill="none" stroke="#5a6a75" stroke-width="0.9" stroke-opacity="0.28" stroke-linejoin="round"/>
<polyline points="2399.9,508.4 2325.1,836.8" fill="none" stroke="#5a6a75" stroke-width="0.9" stroke-opacity="0.28" stroke-linejoin="round"/>
<polyline points="2415.8,509.3 2349.2,836.7" fill="none" stroke="#5a6a75" stroke-width="0.9" stroke-opacity="0.28" stroke-linejoin="round"/>
<polyline points="2431.8,510.2 2373.2,836.5" fill="none" stroke="#5a6a75" stroke-width="0.9" stroke-opacity="0.28" stroke-linejoin="round"/>
<polyline points="2447.8,511.1 2397.2,836.4" fill="none" stroke="#5a6a75" stroke-width="0.9" stroke-opacity="0.28" stroke-linejoin="round"/>
<polyline points="2463.8,512.0 2421.2,836.2" fill="none" stroke="#5a6a75" stroke-width="0.9" stroke-opacity="0.28" stroke-linejoin="round"/>
<polyline points="2479.7,512.9 2445.3,836.1" fill="none" stroke="#5a6a75" stroke-width="0.9" stroke-opacity="0.28" stroke-linejoin="round"/>
<polyline points="2495.7,513.8 2469.3,836.0" fill="none" stroke="#5a6a75" stroke-width="0.9" stroke-opacity="0.28" stroke-linejoin="round"/>
<polyline points="2511.7,514.7 2493.3,835.8" fill="none" stroke="#5a6a75" stroke-width="0.9" stroke-opacity="0.28" stroke-linejoin="round"/>
<polyline points="2527.6,515.6 2517.4,835.7" fill="none" stroke="#5a6a75" stroke-width="0.9" stroke-opacity="0.28" stroke-linejoin="round"/>
<polyline points="2543.6,516.4 2541.4,835.6" fill="none" stroke="#5a6a75" stroke-width="0.9" stroke-opacity="0.28" stroke-linejoin="round"/>
<polyline points="2559.6,517.3 2565.4,835.4" fill="none" stroke="#5a6a75" stroke-width="0.9" stroke-opacity="0.28" stroke-linejoin="round"/>
<polyline points="2575.6,518.2 2589.4,835.3" fill="none" stroke="#5a6a75" stroke-width="0.9" stroke-opacity="0.28" stroke-linejoin="round"/>
<polyline points="2591.5,519.1 2613.5,835.1" fill="none" stroke="#5a6a75" stroke-width="0.9" stroke-opacity="0.28" stroke-linejoin="round"/>
<polyline points="2316.2,515.1 2608.5,530.5" fill="none" stroke="#5a6a75" stroke-width="0.9" stroke-opacity="0.28" stroke-linejoin="round"/>
<polyline points="2312.3,526.2 2609.5,541.0" fill="none" stroke="#5a6a75" stroke-width="0.9" stroke-opacity="0.28" stroke-linejoin="round"/>
<polyline points="2308.5,537.4 2610.5,551.5" fill="none" stroke="#5a6a75" stroke-width="0.9" stroke-opacity="0.28" stroke-linejoin="round"/>
<polyline points="2304.7,548.5 2611.5,562.0" fill="none" stroke="#5a6a75" stroke-width="0.9" stroke-opacity="0.28" stroke-linejoin="round"/>
<polyline points="2300.8,559.6 2612.5,572.5" fill="none" stroke="#5a6a75" stroke-width="0.9" stroke-opacity="0.28" stroke-linejoin="round"/>
<polyline points="2297.0,570.7 2613.5,583.0" fill="none" stroke="#5a6a75" stroke-width="0.9" stroke-opacity="0.28" stroke-linejoin="round"/>
<polyline points="2293.2,581.8 2614.5,593.5" fill="none" stroke="#5a6a75" stroke-width="0.9" stroke-opacity="0.28" stroke-linejoin="round"/>
<polyline points="2289.3,592.9 2615.5,604.0" fill="none" stroke="#5a6a75" stroke-width="0.9" stroke-opacity="0.28" stroke-linejoin="round"/>
<polyline points="2285.5,604.0 2616.5,614.5" fill="none" stroke="#5a6a75" stroke-width="0.9" stroke-opacity="0.28" stroke-linejoin="round"/>
<polyline points="2281.7,615.2 2617.5,625.0" fill="none" stroke="#5a6a75" stroke-width="0.9" stroke-opacity="0.28" stroke-linejoin="round"/>
<polyline points="2277.8,626.3 2618.5,635.5" fill="none" stroke="#5a6a75" stroke-width="0.9" stroke-opacity="0.28" stroke-linejoin="round"/>
<polyline points="2274.0,637.4 2619.5,646.0" fill="none" stroke="#5a6a75" stroke-width="0.9" stroke-opacity="0.28" stroke-linejoin="round"/>
<polyline points="2270.2,648.5 2620.5,656.5" fill="none" stroke="#5a6a75" stroke-width="0.9" stroke-opacity="0.28" stroke-linejoin="round"/>
<polyline points="2266.3,659.6 2621.5,667.0" fill="none" stroke="#5a6a75" stroke-width="0.9" stroke-opacity="0.28" stroke-linejoin="round"/>
<polyline points="2262.5,670.8 2622.5,677.5" fill="none" stroke="#5a6a75" stroke-width="0.9" stroke-opacity="0.28" stroke-linejoin="round"/>
<polyline points="2258.7,681.9 2623.5,688.0" fill="none" stroke="#5a6a75" stroke-width="0.9" stroke-opacity="0.28" stroke-linejoin="round"/>
<polyline points="2254.8,693.0 2624.5,698.5" fill="none" stroke="#5a6a75" stroke-width="0.9" stroke-opacity="0.28" stroke-linejoin="round"/>
<polyline points="2251.0,704.1 2625.5,709.0" fill="none" stroke="#5a6a75" stroke-width="0.9" stroke-opacity="0.28" stroke-linejoin="round"/>
<polyline points="2247.2,715.2 2626.5,719.5" fill="none" stroke="#5a6a75" stroke-width="0.9" stroke-opacity="0.28" stroke-linejoin="round"/>
<polyline points="2243.3,726.3 2627.5,730.0" fill="none" stroke="#5a6a75" stroke-width="0.9" stroke-opacity="0.28" stroke-linejoin="round"/>
<polyline points="2239.5,737.5 2628.5,740.5" fill="none" stroke="#5a6a75" stroke-width="0.9" stroke-opacity="0.28" stroke-linejoin="round"/>
<polyline points="2235.7,748.6 2629.5,751.0" fill="none" stroke="#5a6a75" stroke-width="0.9" stroke-opacity="0.28" stroke-linejoin="round"/>
<polyline points="2231.8,759.7 2630.5,761.5" fill="none" stroke="#5a6a75" stroke-width="0.9" stroke-opacity="0.28" stroke-linejoin="round"/>
<polyline points="2228.0,770.8 2631.5,772.0" fill="none" stroke="#5a6a75" stroke-width="0.9" stroke-opacity="0.28" stroke-linejoin="round"/>
<polyline points="2224.2,781.9 2632.5,782.5" fill="none" stroke="#5a6a75" stroke-width="0.9" stroke-opacity="0.28" stroke-linejoin="round"/>
<polyline points="2220.3,793.0 2633.5,793.0" fill="none" stroke="#5a6a75" stroke-width="0.9" stroke-opacity="0.28" stroke-linejoin="round"/>
<polyline points="2216.5,804.2 2634.5,803.5" fill="none" stroke="#5a6a75" stroke-width="0.9" stroke-opacity="0.28" stroke-linejoin="round"/>
<polyline points="2212.7,815.3 2635.5,814.0" fill="none" stroke="#5a6a75" stroke-width="0.9" stroke-opacity="0.28" stroke-linejoin="round"/>
<polyline points="2208.8,826.4 2636.5,824.5" fill="none" stroke="#5a6a75" stroke-width="0.9" stroke-opacity="0.28" stroke-linejoin="round"/>
<polyline points="2232.2,840.2 2228.8,957.8" fill="none" stroke="#5a6a75" stroke-width="1.0" stroke-opacity="0.5" stroke-linejoin="round"/>
<polyline points="2259.4,842.8 2255.0,960.6" fill="none" stroke="#5a6a75" stroke-width="1.0" stroke-opacity="0.5" stroke-linejoin="round"/>
<polyline points="2286.6,845.5 2281.2,963.4" fill="none" stroke="#5a6a75" stroke-width="1.0" stroke-opacity="0.5" stroke-linejoin="round"/>
<polyline points="2313.8,848.1 2307.5,966.2" fill="none" stroke="#5a6a75" stroke-width="1.0" stroke-opacity="0.5" stroke-linejoin="round"/>
<polyline points="2340.9,850.8 2333.8,969.1" fill="none" stroke="#5a6a75" stroke-width="1.0" stroke-opacity="0.5" stroke-linejoin="round"/>
<polyline points="2368.1,853.4 2360.0,971.9" fill="none" stroke="#5a6a75" stroke-width="1.0" stroke-opacity="0.5" stroke-linejoin="round"/>
<polyline points="2395.3,856.1 2386.2,974.7" fill="none" stroke="#5a6a75" stroke-width="1.0" stroke-opacity="0.5" stroke-linejoin="round"/>
<polyline points="2422.5,858.8 2412.5,977.5" fill="none" stroke="#5a6a75" stroke-width="1.0" stroke-opacity="0.5" stroke-linejoin="round"/>
<polyline points="2449.7,861.4 2438.8,980.3" fill="none" stroke="#5a6a75" stroke-width="1.0" stroke-opacity="0.5" stroke-linejoin="round"/>
<polyline points="2476.9,864.1 2465.0,983.1" fill="none" stroke="#5a6a75" stroke-width="1.0" stroke-opacity="0.5" stroke-linejoin="round"/>
<polyline points="2504.1,866.7 2491.2,985.9" fill="none" stroke="#5a6a75" stroke-width="1.0" stroke-opacity="0.5" stroke-linejoin="round"/>
<polyline points="2531.2,869.4 2517.5,988.8" fill="none" stroke="#5a6a75" stroke-width="1.0" stroke-opacity="0.5" stroke-linejoin="round"/>
<polyline points="2558.4,872.0 2543.8,991.6" fill="none" stroke="#5a6a75" stroke-width="1.0" stroke-opacity="0.5" stroke-linejoin="round"/>
<polyline points="2585.6,874.7 2570.0,994.4" fill="none" stroke="#5a6a75" stroke-width="1.0" stroke-opacity="0.5" stroke-linejoin="round"/>
<polyline points="2612.8,877.3 2596.2,997.2" fill="none" stroke="#5a6a75" stroke-width="1.0" stroke-opacity="0.5" stroke-linejoin="round"/>
<polyline points="1514.9,559.8 1519.5,617.4" fill="none" stroke="#5a6a75" stroke-width="0.9" stroke-opacity="0.35" stroke-linejoin="round"/>
<polyline points="1547.3,562.1 1551.5,619.8" fill="none" stroke="#5a6a75" stroke-width="0.9" stroke-opacity="0.35" stroke-linejoin="round"/>
<polyline points="1579.7,564.4 1583.4,622.2" fill="none" stroke="#5a6a75" stroke-width="0.9" stroke-opacity="0.35" stroke-linejoin="round"/>
<polyline points="1612.1,566.7 1615.4,624.6" fill="none" stroke="#5a6a75" stroke-width="0.9" stroke-opacity="0.35" stroke-linejoin="round"/>
<polyline points="1644.5,569.0 1647.4,627.0" fill="none" stroke="#5a6a75" stroke-width="0.9" stroke-opacity="0.35" stroke-linejoin="round"/>
<polyline points="1676.9,571.2 1679.4,629.4" fill="none" stroke="#5a6a75" stroke-width="0.9" stroke-opacity="0.35" stroke-linejoin="round"/>
<polyline points="1709.3,573.5 1711.4,631.8" fill="none" stroke="#5a6a75" stroke-width="0.9" stroke-opacity="0.35" stroke-linejoin="round"/>
<polyline points="1741.7,575.8 1743.3,634.2" fill="none" stroke="#5a6a75" stroke-width="0.9" stroke-opacity="0.35" stroke-linejoin="round"/>
<polyline points="1774.1,578.1 1775.3,636.6" fill="none" stroke="#5a6a75" stroke-width="0.9" stroke-opacity="0.35" stroke-linejoin="round"/>
<polyline points="1806.5,580.4 1807.3,639.0" fill="none" stroke="#5a6a75" stroke-width="0.9" stroke-opacity="0.35" stroke-linejoin="round"/>
<polyline points="1838.9,582.7 1839.3,641.4" fill="none" stroke="#5a6a75" stroke-width="0.9" stroke-opacity="0.35" stroke-linejoin="round"/>
<polyline points="1871.2,585.0 1871.2,643.8" fill="none" stroke="#5a6a75" stroke-width="0.9" stroke-opacity="0.35" stroke-linejoin="round"/>
<polyline points="1903.6,587.3 1903.2,646.1" fill="none" stroke="#5a6a75" stroke-width="0.9" stroke-opacity="0.35" stroke-linejoin="round"/>
<polyline points="1936.0,589.6 1935.2,648.5" fill="none" stroke="#5a6a75" stroke-width="0.9" stroke-opacity="0.35" stroke-linejoin="round"/>
<polyline points="1968.4,591.9 1967.2,650.9" fill="none" stroke="#5a6a75" stroke-width="0.9" stroke-opacity="0.35" stroke-linejoin="round"/>
<polyline points="2000.8,594.2 1999.2,653.3" fill="none" stroke="#5a6a75" stroke-width="0.9" stroke-opacity="0.35" stroke-linejoin="round"/>
<polyline points="2033.2,596.5 2031.1,655.7" fill="none" stroke="#5a6a75" stroke-width="0.9" stroke-opacity="0.35" stroke-linejoin="round"/>
<polyline points="2065.6,598.8 2063.1,658.1" fill="none" stroke="#5a6a75" stroke-width="0.9" stroke-opacity="0.35" stroke-linejoin="round"/>
<polyline points="2098.0,601.0 2095.1,660.5" fill="none" stroke="#5a6a75" stroke-width="0.9" stroke-opacity="0.35" stroke-linejoin="round"/>
<polyline points="2130.4,603.3 2127.1,662.9" fill="none" stroke="#5a6a75" stroke-width="0.9" stroke-opacity="0.35" stroke-linejoin="round"/>
<polyline points="2162.8,605.6 2159.1,665.3" fill="none" stroke="#5a6a75" stroke-width="0.9" stroke-opacity="0.35" stroke-linejoin="round"/>
<polyline points="2195.2,607.9 2191.0,667.7" fill="none" stroke="#5a6a75" stroke-width="0.9" stroke-opacity="0.35" stroke-linejoin="round"/>
<polyline points="2227.6,610.2 2223.0,670.1" fill="none" stroke="#5a6a75" stroke-width="0.9" stroke-opacity="0.35" stroke-linejoin="round"/>
<polyline points="1484.2,576.7 2258.3,632.5" fill="none" stroke="#5a6a75" stroke-width="0.9" stroke-opacity="0.35" stroke-linejoin="round"/>
<polyline points="1485.8,595.8 2256.7,652.5" fill="none" stroke="#5a6a75" stroke-width="0.9" stroke-opacity="0.35" stroke-linejoin="round"/>
<polyline points="1630.2,664.2 1629.7,709.0" fill="none" stroke="#5a6a75" stroke-width="0.8" stroke-opacity="0.3" stroke-linejoin="round"/>
<polyline points="1647.9,665.3 1646.9,710.4" fill="none" stroke="#5a6a75" stroke-width="0.8" stroke-opacity="0.3" stroke-linejoin="round"/>
<polyline points="1665.6,666.5 1664.2,711.9" fill="none" stroke="#5a6a75" stroke-width="0.8" stroke-opacity="0.3" stroke-linejoin="round"/>
<polyline points="1683.3,667.7 1681.4,713.3" fill="none" stroke="#5a6a75" stroke-width="0.8" stroke-opacity="0.3" stroke-linejoin="round"/>
<polyline points="1701.0,668.8 1698.6,714.8" fill="none" stroke="#5a6a75" stroke-width="0.8" stroke-opacity="0.3" stroke-linejoin="round"/>
<polyline points="1718.8,670.0 1715.8,716.2" fill="none" stroke="#5a6a75" stroke-width="0.8" stroke-opacity="0.3" stroke-linejoin="round"/>
<polyline points="1736.5,671.2 1733.1,717.7" fill="none" stroke="#5a6a75" stroke-width="0.8" stroke-opacity="0.3" stroke-linejoin="round"/>
<polyline points="1754.2,672.3 1750.3,719.2" fill="none" stroke="#5a6a75" stroke-width="0.8" stroke-opacity="0.3" stroke-linejoin="round"/>
<polyline points="1771.9,673.5 1767.5,720.6" fill="none" stroke="#5a6a75" stroke-width="0.8" stroke-opacity="0.3" stroke-linejoin="round"/>
<polyline points="1789.6,674.7 1784.7,722.1" fill="none" stroke="#5a6a75" stroke-width="0.8" stroke-opacity="0.3" stroke-linejoin="round"/>
<polyline points="1807.3,675.8 1801.9,723.5" fill="none" stroke="#5a6a75" stroke-width="0.8" stroke-opacity="0.3" stroke-linejoin="round"/>
<polyline points="1825.0,677.0 1819.2,725.0" fill="none" stroke="#5a6a75" stroke-width="0.8" stroke-opacity="0.3" stroke-linejoin="round"/>
<polyline points="1842.7,678.2 1836.4,726.5" fill="none" stroke="#5a6a75" stroke-width="0.8" stroke-opacity="0.3" stroke-linejoin="round"/>
<polyline points="1860.4,679.3 1853.6,727.9" fill="none" stroke="#5a6a75" stroke-width="0.8" stroke-opacity="0.3" stroke-linejoin="round"/>
<polyline points="1878.1,680.5 1870.8,729.4" fill="none" stroke="#5a6a75" stroke-width="0.8" stroke-opacity="0.3" stroke-linejoin="round"/>
<polyline points="1895.8,681.7 1888.1,730.8" fill="none" stroke="#5a6a75" stroke-width="0.8" stroke-opacity="0.3" stroke-linejoin="round"/>
<polyline points="1913.5,682.8 1905.3,732.3" fill="none" stroke="#5a6a75" stroke-width="0.8" stroke-opacity="0.3" stroke-linejoin="round"/>
<polyline points="1931.2,684.0 1922.5,733.8" fill="none" stroke="#5a6a75" stroke-width="0.8" stroke-opacity="0.3" stroke-linejoin="round"/>
<polyline points="1949.0,685.2 1939.7,735.2" fill="none" stroke="#5a6a75" stroke-width="0.8" stroke-opacity="0.3" stroke-linejoin="round"/>
<polyline points="1966.7,686.3 1956.9,736.7" fill="none" stroke="#5a6a75" stroke-width="0.8" stroke-opacity="0.3" stroke-linejoin="round"/>
<polyline points="1984.4,687.5 1974.2,738.1" fill="none" stroke="#5a6a75" stroke-width="0.8" stroke-opacity="0.3" stroke-linejoin="round"/>
<polyline points="2002.1,688.7 1991.4,739.6" fill="none" stroke="#5a6a75" stroke-width="0.8" stroke-opacity="0.3" stroke-linejoin="round"/>
<polyline points="2019.8,689.8 2008.6,741.0" fill="none" stroke="#5a6a75" stroke-width="0.8" stroke-opacity="0.3" stroke-linejoin="round"/>
<polyline points="2037.5,691.0 2025.8,742.5" fill="none" stroke="#5a6a75" stroke-width="0.8" stroke-opacity="0.3" stroke-linejoin="round"/>
<polyline points="2055.2,692.2 2043.1,744.0" fill="none" stroke="#5a6a75" stroke-width="0.8" stroke-opacity="0.3" stroke-linejoin="round"/>
<polyline points="2072.9,693.3 2060.3,745.4" fill="none" stroke="#5a6a75" stroke-width="0.8" stroke-opacity="0.3" stroke-linejoin="round"/>
<polyline points="2090.6,694.5 2077.5,746.9" fill="none" stroke="#5a6a75" stroke-width="0.8" stroke-opacity="0.3" stroke-linejoin="round"/>
<polyline points="2108.3,695.7 2094.7,748.3" fill="none" stroke="#5a6a75" stroke-width="0.8" stroke-opacity="0.3" stroke-linejoin="round"/>
<polyline points="2126.0,696.8 2111.9,749.8" fill="none" stroke="#5a6a75" stroke-width="0.8" stroke-opacity="0.3" stroke-linejoin="round"/>
<polyline points="2143.8,698.0 2129.2,751.2" fill="none" stroke="#5a6a75" stroke-width="0.8" stroke-opacity="0.3" stroke-linejoin="round"/>
<polyline points="2161.5,699.2 2146.4,752.7" fill="none" stroke="#5a6a75" stroke-width="0.8" stroke-opacity="0.3" stroke-linejoin="round"/>
<polyline points="2179.2,700.3 2163.6,754.2" fill="none" stroke="#5a6a75" stroke-width="0.8" stroke-opacity="0.3" stroke-linejoin="round"/>
<polyline points="2196.9,701.5 2180.8,755.6" fill="none" stroke="#5a6a75" stroke-width="0.8" stroke-opacity="0.3" stroke-linejoin="round"/>
<polyline points="2214.6,702.7 2198.1,757.1" fill="none" stroke="#5a6a75" stroke-width="0.8" stroke-opacity="0.3" stroke-linejoin="round"/>
<polyline points="2232.3,703.8 2215.3,758.5" fill="none" stroke="#5a6a75" stroke-width="0.8" stroke-opacity="0.3" stroke-linejoin="round"/>
<polyline points="2026.5,417.7 1866.6,581.8" fill="none" stroke="#5a6a75" stroke-width="0.9" stroke-opacity="0.45" stroke-linejoin="round"/>
<polyline points="2045.5,416.4 1893.2,583.6" fill="none" stroke="#5a6a75" stroke-width="0.9" stroke-opacity="0.45" stroke-linejoin="round"/>
<polyline points="2064.5,415.1 1919.8,585.4" fill="none" stroke="#5a6a75" stroke-width="0.9" stroke-opacity="0.45" stroke-linejoin="round"/>
<polyline points="2083.5,413.8 1946.4,587.2" fill="none" stroke="#5a6a75" stroke-width="0.9" stroke-opacity="0.45" stroke-linejoin="round"/>
<polyline points="2219.2,432.0 2115.0,596.1" fill="none" stroke="#5a6a75" stroke-width="0.9" stroke-opacity="0.45" stroke-linejoin="round"/>
<polyline points="2249.5,433.0 2160.0,598.2" fill="none" stroke="#5a6a75" stroke-width="0.9" stroke-opacity="0.45" stroke-linejoin="round"/>
<polyline points="2279.8,434.0 2205.0,600.4" fill="none" stroke="#5a6a75" stroke-width="0.9" stroke-opacity="0.45" stroke-linejoin="round"/>
<polyline points="2133.0,427.0 2005.3,590.7" fill="none" stroke="#5a6a75" stroke-width="0.9" stroke-opacity="0.45" stroke-linejoin="round"/>
<polyline points="2161.0,429.0 2037.7,592.3" fill="none" stroke="#5a6a75" stroke-width="0.9" stroke-opacity="0.45" stroke-linejoin="round"/>
<polyline points="2088.5,445.5 2174.1,451.4" fill="none" stroke="#5a6a75" stroke-width="0.9" stroke-opacity="0.45" stroke-linejoin="round"/>
<polyline points="2072.0,466.0 2159.2,471.8" fill="none" stroke="#5a6a75" stroke-width="0.9" stroke-opacity="0.45" stroke-linejoin="round"/>
<polyline points="2055.5,486.5 2144.4,492.1" fill="none" stroke="#5a6a75" stroke-width="0.9" stroke-opacity="0.45" stroke-linejoin="round"/>
<polyline points="2039.0,507.0 2129.5,512.5" fill="none" stroke="#5a6a75" stroke-width="0.9" stroke-opacity="0.45" stroke-linejoin="round"/>
<polyline points="2022.5,527.5 2114.6,532.9" fill="none" stroke="#5a6a75" stroke-width="0.9" stroke-opacity="0.45" stroke-linejoin="round"/>
<polyline points="2006.0,548.0 2099.8,553.2" fill="none" stroke="#5a6a75" stroke-width="0.9" stroke-opacity="0.45" stroke-linejoin="round"/>
<polyline points="1989.5,568.5 2084.9,573.6" fill="none" stroke="#5a6a75" stroke-width="0.9" stroke-opacity="0.45" stroke-linejoin="round"/>
<polyline points="1223.5,815.0 1223.5,891.2" fill="none" stroke="#5a6a75" stroke-width="0.9" stroke-opacity="0.45" stroke-linejoin="round"/>
<polyline points="1251.0,817.5 1251.0,892.5" fill="none" stroke="#5a6a75" stroke-width="0.9" stroke-opacity="0.45" stroke-linejoin="round"/>
<polyline points="1278.5,820.0 1278.5,893.8" fill="none" stroke="#5a6a75" stroke-width="0.9" stroke-opacity="0.45" stroke-linejoin="round"/>
<polyline points="1306.0,822.5 1306.0,895.0" fill="none" stroke="#5a6a75" stroke-width="0.9" stroke-opacity="0.45" stroke-linejoin="round"/>
<polyline points="1333.5,825.0 1333.5,896.2" fill="none" stroke="#5a6a75" stroke-width="0.9" stroke-opacity="0.45" stroke-linejoin="round"/>
<polyline points="1361.0,827.5 1361.0,897.5" fill="none" stroke="#5a6a75" stroke-width="0.9" stroke-opacity="0.45" stroke-linejoin="round"/>
<polyline points="1388.5,830.0 1388.5,898.8" fill="none" stroke="#5a6a75" stroke-width="0.9" stroke-opacity="0.45" stroke-linejoin="round"/>
<polyline points="1196.0,851.2 1416.0,866.2" fill="none" stroke="#5a6a75" stroke-width="0.9" stroke-opacity="0.45" stroke-linejoin="round"/>
<polyline points="889.3,854.8 674.8,975.2" fill="none" stroke="#5a6a75" stroke-width="0.8" stroke-opacity="0.3" stroke-linejoin="round"/>
<polyline points="917.7,857.0 698.5,977.8" fill="none" stroke="#5a6a75" stroke-width="0.8" stroke-opacity="0.3" stroke-linejoin="round"/>
<polyline points="946.0,859.2 722.2,980.5" fill="none" stroke="#5a6a75" stroke-width="0.8" stroke-opacity="0.3" stroke-linejoin="round"/>
<polyline points="974.3,861.5 746.0,983.2" fill="none" stroke="#5a6a75" stroke-width="0.8" stroke-opacity="0.3" stroke-linejoin="round"/>
<polyline points="1002.7,863.8 769.8,985.8" fill="none" stroke="#5a6a75" stroke-width="0.8" stroke-opacity="0.3" stroke-linejoin="round"/>
<polyline points="808.5,882.5 971.6,896.6" fill="none" stroke="#5a6a75" stroke-width="0.8" stroke-opacity="0.3" stroke-linejoin="round"/>
<polyline points="756.0,912.5 912.2,927.2" fill="none" stroke="#5a6a75" stroke-width="0.8" stroke-opacity="0.3" stroke-linejoin="round"/>
<polyline points="703.5,942.5 852.9,957.9" fill="none" stroke="#5a6a75" stroke-width="0.8" stroke-opacity="0.3" stroke-linejoin="round"/>
<polyline points="1181.8,867.5 1015.6,987.9" fill="none" stroke="#5a6a75" stroke-width="0.8" stroke-opacity="0.3" stroke-linejoin="round"/>
<polyline points="1212.7,870.0 1040.2,990.8" fill="none" stroke="#5a6a75" stroke-width="0.8" stroke-opacity="0.3" stroke-linejoin="round"/>
<polyline points="1243.5,872.5 1064.8,993.8" fill="none" stroke="#5a6a75" stroke-width="0.8" stroke-opacity="0.3" stroke-linejoin="round"/>
<polyline points="1274.3,875.0 1089.3,996.7" fill="none" stroke="#5a6a75" stroke-width="0.8" stroke-opacity="0.3" stroke-linejoin="round"/>
<polyline points="1305.2,877.5 1113.9,999.6" fill="none" stroke="#5a6a75" stroke-width="0.8" stroke-opacity="0.3" stroke-linejoin="round"/>
<polyline points="1111.0,895.0 1286.6,910.6" fill="none" stroke="#5a6a75" stroke-width="0.8" stroke-opacity="0.3" stroke-linejoin="round"/>
<polyline points="1071.0,925.0 1237.2,941.2" fill="none" stroke="#5a6a75" stroke-width="0.8" stroke-opacity="0.3" stroke-linejoin="round"/>
<polyline points="1031.0,955.0 1187.9,971.9" fill="none" stroke="#5a6a75" stroke-width="0.8" stroke-opacity="0.3" stroke-linejoin="round"/>
<polyline points="2993.7,1105.0 2992.4,1142.5" fill="none" stroke="#5a6a75" stroke-width="1.0" stroke-opacity="0.45" stroke-linejoin="round"/>
<polyline points="3035.3,1110.0 3032.8,1147.5" fill="none" stroke="#5a6a75" stroke-width="1.0" stroke-opacity="0.45" stroke-linejoin="round"/>
<polyline points="3077.0,1115.0 3073.2,1152.5" fill="none" stroke="#5a6a75" stroke-width="1.0" stroke-opacity="0.45" stroke-linejoin="round"/>
<polyline points="3118.7,1120.0 3113.7,1157.5" fill="none" stroke="#5a6a75" stroke-width="1.0" stroke-opacity="0.45" stroke-linejoin="round"/>
<polyline points="3160.3,1125.0 3154.1,1162.5" fill="none" stroke="#5a6a75" stroke-width="1.0" stroke-opacity="0.45" stroke-linejoin="round"/>
<polyline points="3202.0,1130.0 3194.5,1167.5" fill="none" stroke="#5a6a75" stroke-width="1.0" stroke-opacity="0.45" stroke-linejoin="round"/>
<polyline points="3243.7,1135.0 3234.9,1172.5" fill="none" stroke="#5a6a75" stroke-width="1.0" stroke-opacity="0.45" stroke-linejoin="round"/>
<polyline points="3285.3,1140.0 3275.3,1177.5" fill="none" stroke="#5a6a75" stroke-width="1.0" stroke-opacity="0.45" stroke-linejoin="round"/>
<polyline points="3327.0,1145.0 3315.8,1182.5" fill="none" stroke="#5a6a75" stroke-width="1.0" stroke-opacity="0.45" stroke-linejoin="round"/>
<polyline points="3368.7,1150.0 3356.2,1187.5" fill="none" stroke="#5a6a75" stroke-width="1.0" stroke-opacity="0.45" stroke-linejoin="round"/>
<polyline points="3410.3,1155.0 3396.6,1192.5" fill="none" stroke="#5a6a75" stroke-width="1.0" stroke-opacity="0.45" stroke-linejoin="round"/>
<polyline points="2992.4,1142.5 2981.2,1177.3" fill="none" stroke="#5a6a75" stroke-width="1.0" stroke-opacity="0.45" stroke-linejoin="round"/>
<polyline points="3032.8,1147.5 3020.3,1182.1" fill="none" stroke="#5a6a75" stroke-width="1.0" stroke-opacity="0.45" stroke-linejoin="round"/>
<polyline points="3073.2,1152.5 3059.5,1186.9" fill="none" stroke="#5a6a75" stroke-width="1.0" stroke-opacity="0.45" stroke-linejoin="round"/>
<polyline points="3113.7,1157.5 3098.7,1191.7" fill="none" stroke="#5a6a75" stroke-width="1.0" stroke-opacity="0.45" stroke-linejoin="round"/>
<polyline points="3154.1,1162.5 3137.8,1196.5" fill="none" stroke="#5a6a75" stroke-width="1.0" stroke-opacity="0.45" stroke-linejoin="round"/>
<polyline points="3194.5,1167.5 3177.0,1201.2" fill="none" stroke="#5a6a75" stroke-width="1.0" stroke-opacity="0.45" stroke-linejoin="round"/>
<polyline points="3234.9,1172.5 3216.2,1206.0" fill="none" stroke="#5a6a75" stroke-width="1.0" stroke-opacity="0.45" stroke-linejoin="round"/>
<polyline points="3275.3,1177.5 3255.3,1210.8" fill="none" stroke="#5a6a75" stroke-width="1.0" stroke-opacity="0.45" stroke-linejoin="round"/>
<polyline points="3315.8,1182.5 3294.5,1215.6" fill="none" stroke="#5a6a75" stroke-width="1.0" stroke-opacity="0.45" stroke-linejoin="round"/>
<polyline points="3356.2,1187.5 3333.7,1220.4" fill="none" stroke="#5a6a75" stroke-width="1.0" stroke-opacity="0.45" stroke-linejoin="round"/>
<polyline points="3396.6,1192.5 3372.8,1225.2" fill="none" stroke="#5a6a75" stroke-width="1.0" stroke-opacity="0.45" stroke-linejoin="round"/>
<polyline points="2637.3,253.0 2633.6,287.2" fill="none" stroke="#5a6a75" stroke-width="0.8" stroke-opacity="0.5" stroke-linejoin="round"/>
<polyline points="2652.8,252.8 2650.2,286.9" fill="none" stroke="#5a6a75" stroke-width="0.8" stroke-opacity="0.5" stroke-linejoin="round"/>
<polyline points="2668.3,252.5 2666.8,286.7" fill="none" stroke="#5a6a75" stroke-width="0.8" stroke-opacity="0.5" stroke-linejoin="round"/>
<polyline points="2683.9,252.3 2683.3,286.4" fill="none" stroke="#5a6a75" stroke-width="0.8" stroke-opacity="0.5" stroke-linejoin="round"/>
<polyline points="2699.4,252.0 2699.9,286.2" fill="none" stroke="#5a6a75" stroke-width="0.8" stroke-opacity="0.5" stroke-linejoin="round"/>
<polyline points="2619.4,270.4 2715.7,268.8" fill="none" stroke="#5a6a75" stroke-width="0.8" stroke-opacity="0.5" stroke-linejoin="round"/>
<polygon points="2617.1,270.4 2621.7,253.3 2714.9,251.7 2716.5,273.5 2714.9,285.9 2617.1,287.5" fill="#6fd3f7" fill-opacity="0.55"/>
<polygon points="2621.7,253.3 2714.9,251.7 2715.5,264.2 2621.7,265.7" fill="#b9dff0" fill-opacity="0.5"/>
<polyline points="2617.1,270.4 2621.7,253.3 2714.9,251.7 2716.5,285.9 2617.1,287.5 2617.1,270.4" fill="none" stroke="#5a5e63" stroke-width="1.2" stroke-opacity="1.0" stroke-linejoin="round"/>
<polyline points="2618.6,292.1 2617.1,303.0 2649.7,303.0 2651.2,290.6 2711.8,290.6 2711.8,300.8 2649.7,302.0" fill="none" stroke="#5a5e63" stroke-width="2.2" stroke-opacity="0.8" stroke-linejoin="round"/>
<polyline points="2679.2,290.6 2681.4,302.0" fill="none" stroke="#5a5e63" stroke-width="2.2" stroke-opacity="0.8" stroke-linejoin="round"/>
<polyline points="2711.8,285.9 2718.0,293.7" fill="none" stroke="#5a5e63" stroke-width="2" stroke-opacity="0.8" stroke-linejoin="round"/>
<polyline points="2621.7,276.6 2716.5,273.5" fill="none" stroke="#5a5e63" stroke-width="1.0" stroke-opacity="1.0" stroke-linejoin="round"/>
<polyline points="2640.4,253.3 2640.4,285.9" fill="none" stroke="#5a5e63" stroke-width="1.0" stroke-opacity="0.7" stroke-linejoin="round"/>
<polyline points="2654.3,253.3 2654.3,285.9" fill="none" stroke="#5a5e63" stroke-width="1.0" stroke-opacity="0.7" stroke-linejoin="round"/>
<polyline points="2671.4,253.3 2671.4,285.9" fill="none" stroke="#5a5e63" stroke-width="1.0" stroke-opacity="0.7" stroke-linejoin="round"/>
<polyline points="2685.4,253.3 2685.4,285.9" fill="none" stroke="#5a5e63" stroke-width="1.0" stroke-opacity="0.7" stroke-linejoin="round"/>
<polyline points="2702.5,253.3 2702.5,285.9" fill="none" stroke="#5a5e63" stroke-width="1.0" stroke-opacity="0.7" stroke-linejoin="round"/>
<polygon points="2805.0,270.4 2822.0,251.7 2848.4,252.4 2862.4,259.5 2905.9,261.1 2915.2,268.8 2930.7,270.4 2930.7,287.5 2947.8,285.9 2938.5,306.1 2870.2,304.5 2829.8,298.3 2817.4,284.3" fill="#58c2fa" fill-opacity="0.45"/>
<polyline points="2822.0,251.7 2848.4,252.4 2862.4,259.5 2905.9,261.1 2915.2,268.8 2930.7,270.4 2930.7,287.5 2938.5,306.1 2870.2,304.5 2829.8,298.3 2822.0,251.7" fill="none" stroke="#5a5e63" stroke-width="1.2" stroke-opacity="1.0" stroke-linejoin="round"/>
<polyline points="2862.4,259.5 2867.1,285.9 2870.2,304.5" fill="none" stroke="#5a5e63" stroke-width="1.0" stroke-opacity="1.0" stroke-linejoin="round"/>
<polyline points="2829.8,285.9 2930.7,287.5" fill="none" stroke="#5a5e63" stroke-width="1.0" stroke-opacity="1.0" stroke-linejoin="round"/>
<polyline points="2805.0,270.4 2823.6,270.4" fill="none" stroke="#5a5e63" stroke-width="1.6" stroke-opacity="1.0" stroke-linejoin="round"/>
<polyline points="2805.0,277.2 2823.6,277.2" fill="none" stroke="#5a5e63" stroke-width="1.6" stroke-opacity="1.0" stroke-linejoin="round"/>
<polyline points="2930.7,285.3 2949.4,286.5" fill="none" stroke="#5a5e63" stroke-width="2" stroke-opacity="1.0" stroke-linejoin="round"/>
<polygon points="3174.5,341.8 3180.7,317.0 3249.1,311.4 3311.2,321.6 3356.2,346.5 3365.5,357.3 3360.9,379.1 3336.0,377.5 3311.2,374.4 3208.7,366.6" fill="#58c2fa" fill-opacity="0.5"/>
<polygon points="3180.7,317.0 3249.1,311.4 3311.2,321.6 3356.2,346.5 3208.7,349.6" fill="#bcd6ea" fill-opacity="0.7"/>
<polygon points="3174.5,341.8 3180.7,323.2 3208.7,349.6 3356.2,346.5 3365.5,357.3 3360.9,379.1 3336.0,377.5 3311.2,374.4 3208.7,366.6" fill="#8fdcf6" fill-opacity="0.45"/>
<polyline points="3252.2,348.0 3339.1,354.2 3336.0,376.0" fill="none" stroke="#5a5e63" stroke-width="1.0" stroke-opacity="0.7" stroke-linejoin="round"/>
<polyline points="3277.0,352.7 3273.9,372.9" fill="none" stroke="#5a5e63" stroke-width="1.0" stroke-opacity="0.6" stroke-linejoin="round"/>
<polyline points="3332.9,354.2 3364.0,357.3" fill="none" stroke="#5a5e63" stroke-width="1.0" stroke-opacity="0.7" stroke-linejoin="round"/>
<polyline points="3187.0,332.5 3187.0,357.3" fill="none" stroke="#5a5e63" stroke-width="1.0" stroke-opacity="0.6" stroke-linejoin="round"/>
<polyline points="3196.3,332.5 3196.3,357.3" fill="none" stroke="#5a5e63" stroke-width="1.0" stroke-opacity="0.6" stroke-linejoin="round"/>
<polyline points="3202.5,332.5 3202.5,357.3" fill="none" stroke="#5a5e63" stroke-width="1.0" stroke-opacity="0.6" stroke-linejoin="round"/>
<polyline points="3174.5,341.8 3180.7,317.0 3249.1,311.4 3311.2,321.6 3356.2,346.5 3365.5,357.3 3360.9,379.1 3336.0,377.5 3311.2,374.4 3208.7,366.6 3174.5,341.8" fill="none" stroke="#5a5e63" stroke-width="1.1" stroke-opacity="0.8" stroke-linejoin="round"/>
<polyline points="3180.7,317.0 3208.7,349.6 3356.2,346.5" fill="none" stroke="#5a5e63" stroke-width="1.0" stroke-opacity="0.7" stroke-linejoin="round"/>
<polyline points="3208.7,349.6 3208.7,366.6" fill="none" stroke="#5a5e63" stroke-width="1.0" stroke-opacity="0.7" stroke-linejoin="round"/></svg></div></div><!--/SCENE-->
<div id="split" class="abs"></div>
<svg class="abs" style="left:3400px;top:240px" width="425" height="360" viewBox="3400 240 425 360">
<defs><filter id="bl" x="-20%" y="-20%" width="140%" height="140%"><feGaussianBlur stdDeviation="3"/></filter><filter id="bl2"><feGaussianBlur stdDeviation="1.2"/></filter>
<linearGradient id="cf" x1="0" y1="0" x2="0" y2="1"><stop offset="0" stop-color="#eef0f3"/><stop offset="1" stop-color="#dfe3e8"/></linearGradient></defs>
<g filter="url(#bl)"><ellipse cx="3660" cy="482" rx="116" ry="62" fill="none" stroke="#c9ced5" stroke-width="27" opacity="0.65"/></g>
<g filter="url(#bl2)" fill="#aeb3ba" font-family="Liberation Sans" font-weight="700">
<text x="3537" y="452" font-size="30" transform="rotate(-12 3555 442)" font-style="italic">W</text>
<text x="3765" y="480" font-size="28" transform="rotate(8 3780 470)">E</text>
<text x="3613" y="557" font-size="40" transform="rotate(6 3630 545)">S</text>
</g>
<path d="M3600 478 L3703 492 L3704 496 L3602 482 Z" fill="#b9bec4"/>
<path d="M3589.5 375 L3622 338 L3719 344 L3710 386 Z" fill="#eceef1"/>
<path d="M3589.5 375 L3710 386 L3703 490 L3597.6 473 Z" fill="url(#cf)"/>
<path d="M3710 386 L3719 344 L3713 470 L3703 490 Z" fill="#e2e5e9"/>
<g fill="none" stroke="#a5aab0" stroke-width="2" stroke-dasharray="9 6">
<path d="M3589.5 375 L3622 338 L3719 344 L3710 386 Z"/><path d="M3589.5 375 L3597.6 473 L3703 490 L3710 386"/><path d="M3719 344 L3713 470 L3703 490"/>
</g>
<g filter="url(#bl2)" fill="#a3a8af" font-family="Liberation Sans" font-weight="700">
<text x="3608" y="443" font-size="35" transform="rotate(4 3650 430)" textLength="90" lengthAdjust="spacingAndGlyphs">VORNE</text>
<text x="3627" y="365" font-size="17" font-style="italic" transform="rotate(4 3660 360)" textLength="68" lengthAdjust="spacingAndGlyphs">OBEN</text>
</g>
</svg>
<div class="abs" style="left:2147px;top:1467px;width:63px;height:7px;border-radius:4px;background:#9ca3af"></div>
<div class="abs" style="left:2031px;top:115px;width:294px;height:88px;border-radius:15px;background:#fff;box-shadow:0 2px 6px rgba(0,0,0,0.08)"></div>
<svg class="abs" style="left:2063px;top:143px" width="32" height="32" viewBox="0 0 24 24" fill="none" stroke="#000" stroke-width="2.2" stroke-linecap="round" stroke-linejoin="round"><path d="m12.83 2.18a2 2 0 0 0-1.66 0L2.6 6.08a1 1 0 0 0 0 1.83l8.58 3.91a2 2 0 0 0 1.66 0l8.58-3.9a1 1 0 0 0 0-1.83Z"/><path d="m22 17.65-9.17 4.16a2 2 0 0 1-1.66 0L2 17.65"/><path d="m22 12.65-9.17 4.16a2 2 0 0 1-1.66 0L2 12.65"/></svg>
<div class="abs" style="left:2111px;top:146.5px;font-size:28px;font-weight:700;color:#000;line-height:1;letter-spacing:-0.5px">View</div>
<div class="abs" style="left:2189px;top:139px;width:40px;height:40px;border-radius:50%;background:#22c55e;color:#fff;font-size:23px;font-weight:700;line-height:40px;text-align:center">3</div>
<svg class="abs" style="left:2265px;top:150px" width="24" height="18" viewBox="0 0 24 18"><path d="M3 4 L12 13 L21 4" fill="none" stroke="#000" stroke-width="3" stroke-linecap="round" stroke-linejoin="round"/></svg>
<div class="abs" style="left:1559px;top:1330px;width:499px;height:100px;border-radius:22px;background:#fff;box-shadow:0 1px 4px rgba(0,0,0,0.10)"></div>
<div class="abs" style="left:2078px;top:1330px;width:300px;height:100px;border-radius:22px;background:#fff;box-shadow:0 1px 4px rgba(0,0,0,0.10)"></div>
<div class="abs" style="left:2398px;top:1330px;width:400px;height:100px;border-radius:22px;background:#fff;box-shadow:0 1px 4px rgba(0,0,0,0.10)"></div>
<div class="abs" style="left:1567px;top:1338px;width:84px;height:84px;border-radius:14px;background:#e0e0e0;border:2px solid #d4d4d4"></div>
<svg class="abs" style="left:1540px;top:1330px" width="1280" height="100" viewBox="1540 1330 1280 100">
<g fill="#333">
 <path d="M1631 1363 L1638.5 1348 L1646 1363 Z"/><path d="M2029.5 1363 L2037 1348 L2044.7 1363 Z"/><path d="M2249.5 1363 L2257 1348 L2264.8 1363 Z"/>
</g>
<g fill="none" stroke="#333" stroke-width="4.5" stroke-linecap="round">
 <path d="M1609 1359 V1384"/><path d="M1609 1398 V1405"/>
 <path d="M1600 1372 C1575 1376 1582 1392 1609 1392 C1640 1392 1640 1372 1618 1371"/>
 <path d="M1602 1383 L1594 1390 L1603 1397"/>
</g>
<path fill="#333" d="M1703 1402 C1696 1399 1690 1390 1686 1381 L1690 1379 C1694 1383 1697 1386 1700 1387 L1698 1363 C1698 1360 1702 1360 1702 1363 L1704 1379 L1704 1360 C1704 1357 1708 1357 1708 1360 L1709 1378 L1711 1361 C1711 1358 1715 1358 1715 1361 L1714 1379 L1718 1365 C1719 1362 1723 1363 1722 1366 L1719 1390 C1718 1398 1712 1404 1703 1402 Z"/>
<g fill="none" stroke="#333" stroke-width="4.5">
 <path d="M1809 1364 V1397"/><path d="M1795 1386 L1809 1399 L1823 1386"/><path d="M1798 1369 L1809 1363 L1820 1369"/>
</g>
<g fill="#333">
 <circle cx="1908.5" cy="1364" r="4.3"/>
 <path d="M1902 1371 H1915 L1921 1386 L1918.5 1387 L1914 1378 V1405 H1910 V1390 H1907 V1405 H1903 V1378 L1898.5 1387 L1896 1386 Z"/>
 <rect x="1984" y="1370" width="31" height="26" rx="2"/><rect x="1987" y="1373" width="8" height="6" fill="#fff"/>
 <path d="M2017 1378 L2028 1370 V1396 L2017 1388 Z"/>
</g>
<g transform="translate(2131 1381) rotate(-45)"><rect x="-33" y="-8" width="66" height="16" fill="#333"/><g fill="#fff"><rect x="-26" y="-8" width="2.5" height="5"/><rect x="-18" y="-8" width="2.5" height="7"/><rect x="-10" y="-8" width="2.5" height="5"/><rect x="-2" y="-8" width="2.5" height="7"/><rect x="6" y="-8" width="2.5" height="5"/><rect x="14" y="-8" width="2.5" height="7"/><circle cx="26" cy="-2" r="2"/></g></g>
<g fill="#333">
 <path d="M2207 1369 L2231 1378 V1403 L2207 1394 Z"/><path d="M2210 1374 L2228 1381 V1398 L2210 1391 Z" fill="#fff"/><path d="M2214 1380 L2224 1384 V1394 L2214 1390 Z"/><path d="M2217 1384 L2222 1386 V1390 L2217 1388 Z" fill="#fff"/>
 <path d="M2220 1367 L2233 1361 L2246 1367 V1373 L2233 1379 L2220 1373 Z"/><path d="M2234 1388 L2246 1383 V1389 L2234 1394 Z"/>
 <path d="M2328 1360 L2345 1368 L2328 1376 L2311 1368 Z"/><path d="M2304 1377 L2322 1385 V1404 L2304 1396 Z"/><path d="M2352 1377 L2334 1385 V1404 L2352 1396 Z"/>
 <rect x="2436" y="1358" width="21" height="18"/><rect x="2424" y="1390" width="14" height="14"/><rect x="2456" y="1390" width="14" height="14"/>
</g>
<g fill="none" stroke="#333" stroke-width="2"><path d="M2446.5 1376 V1381 M2431 1390 V1381 H2463 V1390"/></g>
<g fill="#333"><rect x="2532" y="1360" width="32" height="44"/></g>
<g fill="#fff"><rect x="2535" y="1363" width="26" height="19"/><circle cx="2548" cy="1372" r="0"/></g>
<circle cx="2548" cy="1371" r="6" fill="#333"/>
<g fill="none" stroke="#fff" stroke-width="1.6"><path d="M2534 1389 H2562 M2534 1397 H2562"/></g>
<g fill="#fff"><rect x="2542" y="1385" width="3" height="7"/><rect x="2551" y="1393" width="3" height="7"/></g>
<g transform="translate(2646.5 1382)"><circle r="14" fill="#333"/><g fill="#333"><rect x="-3" y="-20" width="6" height="8" transform="rotate(0)"/><rect x="-3" y="-20" width="6" height="8" transform="rotate(45)"/><rect x="-3" y="-20" width="6" height="8" transform="rotate(90)"/><rect x="-3" y="-20" width="6" height="8" transform="rotate(135)"/><rect x="-3" y="-20" width="6" height="8" transform="rotate(180)"/><rect x="-3" y="-20" width="6" height="8" transform="rotate(225)"/><rect x="-3" y="-20" width="6" height="8" transform="rotate(270)"/><rect x="-3" y="-20" width="6" height="8" transform="rotate(315)"/></g><circle r="8" fill="#fff"/></g>
<rect x="2730" y="1364" width="36" height="36" fill="#333"/><path d="M2732.5 1398 V1380 H2748 V1398 Z" fill="#fff"/><path d="M2747 1366.5 H2763.5 V1381 Z" fill="#fff"/><path d="M2745 1383 L2759 1369" stroke="#fff" stroke-width="3"/><path d="M2752 1367.5 H2762 V1377.5" fill="#fff"/>
</svg>
<svg class="abs" style="left:3450px;top:278px" width="44" height="38" viewBox="0 0 44 38"><path d="M4 20 L22 3 L40 20 H35 V35 H25 V24 H19 V35 H9 V20 Z" fill="none" stroke="#a3a8ad" stroke-width="2.2" stroke-linejoin="round"/></svg>
<div id="tbl" class="abs"></div>
<div class="abs" style="left:539px;top:1486.5px;width:184px;height:67px;border:2px solid #e5e7eb;border-radius:12px;background:#fff"></div>
<svg class="abs" style="left:564.2px;top:1503.2px" width="32.5" height="32.5" viewBox="0 0 24 24" fill="none" stroke="#d1d5db" stroke-width="2" stroke-linecap="round" stroke-linejoin="round"><circle cx="11" cy="11" r="8"/><path d="m21 21-4.3-4.3"/></svg>
<div class="abs" style="left:618.0px;top:1508.4px;font-size:27px;font-weight:400;color:#d1d5db;line-height:1;white-space:nowrap;letter-spacing:0px">Isolate</div>
<div class="abs" style="left:740px;top:1486.5px;width:176px;height:67px;border:2px solid #e5e7eb;border-radius:12px;background:#fff"></div>
<svg class="abs" style="left:765.2px;top:1503.2px" width="32.5" height="32.5" viewBox="0 0 24 24" fill="none" stroke="#d1d5db" stroke-width="2" stroke-linecap="round" stroke-linejoin="round"><circle cx="11" cy="11" r="8"/><line x1="21" x2="16.65" y1="21" y2="16.65"/><line x1="11" x2="11" y1="8" y2="14"/><line x1="8" x2="14" y1="11" y2="11"/></svg>
<div class="abs" style="left:818.0px;top:1508.0px;font-size:27.5px;font-weight:400;color:#d1d5db;line-height:1;white-space:nowrap;letter-spacing:0px">Zoom</div>
<div class="abs" style="left:933px;top:1486.5px;width:166px;height:67px;border:2px solid #e5e7eb;border-radius:12px;background:#fff"></div>
<svg class="abs" style="left:958.0px;top:1503.0px" width="34.0" height="34.0" viewBox="0 0 24 24" fill="none" stroke="#d1d5db" stroke-width="2" stroke-linecap="round" stroke-linejoin="round"><path d="M18 6 6 18"/><path d="m6 6 12 12"/></svg>
<div class="abs" style="left:1011.5px;top:1509.3px;font-size:26px;font-weight:400;color:#d1d5db;line-height:1;white-space:nowrap;letter-spacing:0px">Clear</div>
<div class="abs" style="left:1116px;top:1486.5px;width:205px;height:67px;border:2px solid #d1d5db;border-radius:12px;background:#fff"></div>
<svg class="abs" style="left:1141.0px;top:1503.0px" width="34.0" height="34.0" viewBox="0 0 24 24" fill="none" stroke="#1f2937" stroke-width="2" stroke-linecap="round" stroke-linejoin="round"><path d="M2.062 12.348a1 1 0 0 1 0-.696 10.75 10.75 0 0 1 19.876 0 1 1 0 0 1 0 .696 10.75 10.75 0 0 1-19.876 0"/><circle cx="12" cy="12" r="3"/></svg>
<div class="abs" style="left:1194.5px;top:1508.7px;font-size:26.7px;font-weight:400;color:#1f2937;line-height:1;white-space:nowrap;letter-spacing:0px">Show all</div>
<div class="abs" style="left:1339px;top:1486.5px;width:218px;height:67px;border:2px solid #d1d5db;border-radius:12px;background:#fff"></div>
<svg class="abs" style="left:1363.0px;top:1503.0px" width="34.0" height="34.0" viewBox="0 0 24 24" fill="none" stroke="#1f2937" stroke-width="2" stroke-linecap="round" stroke-linejoin="round"><path d="M3 7V5a2 2 0 0 1 2-2h2"/><path d="M17 3h2a2 2 0 0 1 2 2v2"/><path d="M21 17v2a2 2 0 0 1-2 2h-2"/><path d="M7 21H5a2 2 0 0 1-2-2v-2"/></svg>
<div class="abs" style="left:1418.0px;top:1508.0px;font-size:27.5px;font-weight:400;color:#1f2937;line-height:1;white-space:nowrap;letter-spacing:0px">Fit model</div>
<div class="abs" style="left:3277px;top:1486.5px;width:245px;height:67px;border:2px solid #e5e7eb;border-radius:12px;background:#fff"></div>
<svg class="abs" style="left:3301.5px;top:1504.0px" width="34.0" height="34.0" viewBox="0 0 24 24" fill="none" stroke="#d1d5db" stroke-width="2" stroke-linecap="round" stroke-linejoin="round"><path d="M13.013 3H2l8 9.46V19l4 2v-8.54l.9-1.055"/><path d="m22 3-5 5"/><path d="m17 3 5 5"/></svg>
<div class="abs" style="left:3356.0px;top:1508.9px;font-size:26.5px;font-weight:400;color:#d1d5db;line-height:1;white-space:nowrap;letter-spacing:0px">Reset filters</div>
<div class="abs" style="left:3539px;top:1486.5px;width:83px;height:67px;border:2px solid #d1d5db;border-radius:12px;background:#fff"></div>
<svg class="abs" style="left:3564.0px;top:1503.0px" width="34.0" height="34.0" viewBox="0 0 24 24" fill="none" stroke="#1f2937" stroke-width="2" stroke-linecap="round" stroke-linejoin="round"><path d="M12.22 2h-.44a2 2 0 0 0-2 2v.18a2 2 0 0 1-1 1.73l-.43.25a2 2 0 0 1-2 0l-.15-.08a2 2 0 0 0-2.73.73l-.22.38a2 2 0 0 0 .73 2.730l.15.1a2 2 0 0 1 1 1.72v.51a2 2 0 0 1-1 1.74l-.15.09a2 2 0 0 0-.73 2.73l.22.38a2 2 0 0 0 2.73.73l.15-.08a2 2 0 0 1 2 0l.43.25a2 2 0 0 1 1 1.73V20a2 2 0 0 0 2 2h.44a2 2 0 0 0 2-2v-.18a2 2 0 0 1 1-1.73l.43-.25a2 2 0 0 1 2 0l.15.08a2 2 0 0 0 2.73-.73l.22-.39a2 2 0 0 0-.73-2.73l-.15-.08a2 2 0 0 1-1-1.74v-.5a2 2 0 0 1 1-1.74l.15-.09a2 2 0 0 0 .73-2.73l-.22-.38a2 2 0 0 0-2.73-.73l-.15.08a2 2 0 0 1-2 0l-.43-.25a2 2 0 0 1-1-1.73V4a2 2 0 0 0-2-2z"/><circle cx="12" cy="12" r="3"/></svg>
<div class="abs" style="left:3639px;top:1486.5px;width:179px;height:67px;border:2px solid #2563eb;border-radius:12px;background:#2563eb"></div>
<svg class="abs" style="left:3662.0px;top:1503.0px" width="34.0" height="34.0" viewBox="0 0 24 24" fill="none" stroke="#fff" stroke-width="2" stroke-linecap="round" stroke-linejoin="round"><path d="M21 15v4a2 2 0 0 1-2 2H5a2 2 0 0 1-2-2v-4"/><polyline points="7 10 12 15 17 10"/><line x1="12" x2="12" y1="15" y2="3"/></svg>
<div class="abs" style="left:3716.0px;top:1508.0px;font-size:27.5px;font-weight:400;color:#fff;line-height:1;white-space:nowrap;letter-spacing:0px">Export</div>
<div class="abs" style="left:531px;top:1562px;width:3256px;height:2px;background:#e5e7eb"></div>
<div class="abs" style="left:531px;top:1564px;width:3256px;height:58px;background:#f9fafb"></div>
<div class="abs" style="left:531px;top:1686.5px;width:3256px;height:2px;background:#e5e7eb"></div>
<div class="abs" style="left:531px;top:1752px;width:3256px;height:2px;background:#e5e7eb"></div>
<div class="abs" style="left:531px;top:1817.5px;width:3256px;height:2px;background:#e5e7eb"></div>
<div class="abs" style="left:531px;top:1859px;width:3256px;height:50px;background:#f3f4f6"></div>
<div class="abs" style="left:547.5px;top:1577px;width:31px;height:31px;border:2.5px solid #6b7280;border-radius:5px;background:#fff"></div>
<div class="abs" style="left:611.6px;top:1583.6px;font-size:22.5px;font-weight:700;color:#6b7280;line-height:1;white-space:nowrap;letter-spacing:0.7px">VIEW</div>
<div class="abs" style="left:723.2px;top:1583.6px;font-size:22.5px;font-weight:700;color:#6b7280;line-height:1;white-space:nowrap;letter-spacing:0.7px">FOCUS</div>
<div class="abs" style="left:835.8px;top:1583.6px;font-size:22.5px;font-weight:700;color:#6b7280;line-height:1;white-space:nowrap;letter-spacing:0.7px">AREA</div>
<svg class="abs" style="left:911.8px;top:1580.0px" width="25.0" height="25.0" viewBox="0 0 24 24" fill="none" stroke="#9ca3af" stroke-width="2" stroke-linecap="round" stroke-linejoin="round"><path d="m21 16-4 4-4-4"/><path d="M17 20V4"/><path d="m3 8 4-4 4 4"/><path d="M7 4v16"/></svg>
<svg class="abs" style="left:951.2px;top:1579.5px" width="25.5" height="25.5" viewBox="0 0 24 24" fill="none" stroke="#9ca3af" stroke-width="2" stroke-linecap="round" stroke-linejoin="round"><polygon points="22 3 2 3 10 12.46 10 19 14 21 14 12.46 22 3"/></svg>
<div class="abs" style="left:1056.0px;top:1583.6px;font-size:22.5px;font-weight:700;color:#6b7280;line-height:1;white-space:nowrap;letter-spacing:0.7px">VOLUME</div>
<svg class="abs" style="left:1170.7px;top:1580.0px" width="25.0" height="25.0" viewBox="0 0 24 24" fill="none" stroke="#9ca3af" stroke-width="2" stroke-linecap="round" stroke-linejoin="round"><path d="m21 16-4 4-4-4"/><path d="M17 20V4"/><path d="m3 8 4-4 4 4"/><path d="M7 4v16"/></svg>
<svg class="abs" style="left:1210.2px;top:1579.5px" width="25.5" height="25.5" viewBox="0 0 24 24" fill="none" stroke="#9ca3af" stroke-width="2" stroke-linecap="round" stroke-linejoin="round"><polygon points="22 3 2 3 10 12.46 10 19 14 21 14 12.46 22 3"/></svg>
<div class="abs" style="left:1330.0px;top:1583.6px;font-size:22.5px;font-weight:700;color:#6b7280;line-height:1;white-space:nowrap;letter-spacing:0.7px">SIA416</div>
<svg class="abs" style="left:1469.1px;top:1580.0px" width="25.0" height="25.0" viewBox="0 0 24 24" fill="none" stroke="#9ca3af" stroke-width="2" stroke-linecap="round" stroke-linejoin="round"><path d="m21 16-4 4-4-4"/><path d="M17 20V4"/><path d="m3 8 4-4 4 4"/><path d="M7 4v16"/></svg>
<svg class="abs" style="left:1509.2px;top:1579.5px" width="25.5" height="25.5" viewBox="0 0 24 24" fill="none" stroke="#9ca3af" stroke-width="2" stroke-linecap="round" stroke-linejoin="round"><polygon points="22 3 2 3 10 12.46 10 19 14 21 14 12.46 22 3"/></svg>
<div class="abs" style="left:1638.0px;top:1583.6px;font-size:22.5px;font-weight:700;color:#6b7280;line-height:1;white-space:nowrap;letter-spacing:0.7px">SITENAME</div>
<svg class="abs" style="left:1773.5px;top:1580.0px" width="25.0" height="25.0" viewBox="0 0 24 24" fill="none" stroke="#9ca3af" stroke-width="2" stroke-linecap="round" stroke-linejoin="round"><path d="m21 16-4 4-4-4"/><path d="M17 20V4"/><path d="m3 8 4-4 4 4"/><path d="M7 4v16"/></svg>
<svg class="abs" style="left:1812.2px;top:1579.5px" width="25.5" height="25.5" viewBox="0 0 24 24" fill="none" stroke="#9ca3af" stroke-width="2" stroke-linecap="round" stroke-linejoin="round"><polygon points="22 3 2 3 10 12.46 10 19 14 21 14 12.46 22 3"/></svg>
<div class="abs" style="left:1939.5px;top:1583.6px;font-size:22.5px;font-weight:700;color:#6b7280;line-height:1;white-space:nowrap;letter-spacing:0.7px">BUILDINGNAME</div>
<svg class="abs" style="left:2143.2px;top:1580.0px" width="25.0" height="25.0" viewBox="0 0 24 24" fill="none" stroke="#9ca3af" stroke-width="2" stroke-linecap="round" stroke-linejoin="round"><path d="m21 16-4 4-4-4"/><path d="M17 20V4"/><path d="m3 8 4-4 4 4"/><path d="M7 4v16"/></svg>
<svg class="abs" style="left:2182.2px;top:1579.5px" width="25.5" height="25.5" viewBox="0 0 24 24" fill="none" stroke="#9ca3af" stroke-width="2" stroke-linecap="round" stroke-linejoin="round"><polygon points="22 3 2 3 10 12.46 10 19 14 21 14 12.46 22 3"/></svg>
<div class="abs" style="left:2336.5px;top:1583.6px;font-size:22.5px;font-weight:700;color:#6b7280;line-height:1;white-space:nowrap;letter-spacing:0.7px">FLOOR</div>
<svg class="abs" style="left:2426.5px;top:1580.0px" width="25.0" height="25.0" viewBox="0 0 24 24" fill="none" stroke="#9ca3af" stroke-width="2" stroke-linecap="round" stroke-linejoin="round"><path d="m21 16-4 4-4-4"/><path d="M17 20V4"/><path d="m3 8 4-4 4 4"/><path d="M7 4v16"/></svg>
<svg class="abs" style="left:2466.2px;top:1579.5px" width="25.5" height="25.5" viewBox="0 0 24 24" fill="none" stroke="#9ca3af" stroke-width="2" stroke-linecap="round" stroke-linejoin="round"><polygon points="22 3 2 3 10 12.46 10 19 14 21 14 12.46 22 3"/></svg>
<div class="abs" style="left:2578.6px;top:1583.6px;font-size:22.5px;font-weight:700;color:#6b7280;line-height:1;white-space:nowrap;letter-spacing:0.7px">ROOMSUFFIX</div>
<svg class="abs" style="left:2749.9px;top:1580.0px" width="25.0" height="25.0" viewBox="0 0 24 24" fill="none" stroke="#9ca3af" stroke-width="2" stroke-linecap="round" stroke-linejoin="round"><path d="m21 16-4 4-4-4"/><path d="M17 20V4"/><path d="m3 8 4-4 4 4"/><path d="M7 4v16"/></svg>
<svg class="abs" style="left:2789.9px;top:1579.5px" width="25.5" height="25.5" viewBox="0 0 24 24" fill="none" stroke="#9ca3af" stroke-width="2" stroke-linecap="round" stroke-linejoin="round"><polygon points="22 3 2 3 10 12.46 10 19 14 21 14 12.46 22 3"/></svg>
<div class="abs" style="left:2931.4px;top:1583.6px;font-size:22.5px;font-weight:700;color:#6b7280;line-height:1;white-space:nowrap;letter-spacing:0.7px">ROOMCODE</div>
<svg class="abs" style="left:3086.1px;top:1580.0px" width="25.0" height="25.0" viewBox="0 0 24 24" fill="none" stroke="#9ca3af" stroke-width="2" stroke-linecap="round" stroke-linejoin="round"><path d="m21 16-4 4-4-4"/><path d="M17 20V4"/><path d="m3 8 4-4 4 4"/><path d="M7 4v16"/></svg>
<svg class="abs" style="left:3127.1px;top:1579.5px" width="25.5" height="25.5" viewBox="0 0 24 24" fill="none" stroke="#9ca3af" stroke-width="2" stroke-linecap="round" stroke-linejoin="round"><polygon points="22 3 2 3 10 12.46 10 19 14 21 14 12.46 22 3"/></svg>
<div class="abs" style="left:3262.4px;top:1583.6px;font-size:22.5px;font-weight:700;color:#6b7280;line-height:1;white-space:nowrap;letter-spacing:0.7px">ROOMNAME</div>
<svg class="abs" style="left:3424.5px;top:1580.0px" width="25.0" height="25.0" viewBox="0 0 24 24" fill="none" stroke="#9ca3af" stroke-width="2" stroke-linecap="round" stroke-linejoin="round"><path d="m21 16-4 4-4-4"/><path d="M17 20V4"/><path d="m3 8 4-4 4 4"/><path d="M7 4v16"/></svg>
<svg class="abs" style="left:3464.2px;top:1579.5px" width="25.5" height="25.5" viewBox="0 0 24 24" fill="none" stroke="#9ca3af" stroke-width="2" stroke-linecap="round" stroke-linejoin="round"><polygon points="22 3 2 3 10 12.46 10 19 14 21 14 12.46 22 3"/></svg>
<svg class="abs" style="left:1420.7px;top:1574.7px" width="34.0" height="34.0" viewBox="0 0 24 24" fill="none" stroke="#9ca3af" stroke-width="2" stroke-linecap="round" stroke-linejoin="round"><circle cx="13.5" cy="6.5" r=".5" fill="currentColor"/><circle cx="17.5" cy="10.5" r=".5" fill="currentColor"/><circle cx="8.5" cy="7.5" r=".5" fill="currentColor"/><circle cx="6.5" cy="12.5" r=".5" fill="currentColor"/><path d="M12 2C6.5 2 2 6.5 2 12s4.5 10 10 10c.926 0 1.648-.746 1.648-1.688 0-.437-.18-.835-.437-1.125-.29-.289-.438-.652-.438-1.125a1.64 1.64 0 0 1 1.668-1.668h1.996c3.051 0 5.555-2.503 5.555-5.554C21.965 6.012 17.461 2 12 2z"/></svg>
<div class="abs" style="left:531px;top:1622px;width:3256px;height:237px;overflow:hidden"><div class="abs" style="left:-531px;top:-1622px;width:3825px;height:1975px"><div class="abs" style="left:547.5px;top:1637.5px;width:31px;height:31px;border:2.5px solid #6b7280;border-radius:5px;background:#fff"></div><div class="abs" style="left:639px;top:1656.0px;width:7px;height:2px;background:#d1d5db"></div><svg class="abs" style="left:745.6px;top:1636.6px" width="34.8" height="34.8" viewBox="0 0 24 24" fill="none" stroke="#2563eb" stroke-width="2" stroke-linecap="round" stroke-linejoin="round"><circle cx="12" cy="12" r="10"/><line x1="22" x2="18" y1="12" y2="12"/><line x1="6" x2="2" y1="12" y2="12"/><line x1="12" x2="12" y1="6" y2="2"/><line x1="12" x2="12" y1="22" y2="18"/></svg><div class="abs" style="left:837.0px;top:1645.0px;font-size:22.5px;font-weight:400;color:#111827;line-height:1;white-space:nowrap;letter-spacing:0px">18.09</div><div class="abs" style="left:1056.0px;top:1645.0px;font-size:22.5px;font-weight:400;color:#111827;line-height:1;white-space:nowrap;letter-spacing:0px">55.17</div><div class="abs" style="left:1330.5px;top:1639.0px;width:31px;height:31px;border:2px solid #d1d5db;border-radius:7px;background:#dc2626"></div><div class="abs" style="left:1371.0px;top:1645.0px;font-size:22.5px;font-weight:400;color:#111827;line-height:1;white-space:nowrap;letter-spacing:0px">HNF</div><div class="abs" style="left:1939.5px;top:1645.0px;font-size:22.5px;font-weight:400;color:#111827;line-height:1;white-space:nowrap;letter-spacing:0px">AO</div><div class="abs" style="left:2337.0px;top:1645.0px;font-size:22.5px;font-weight:400;color:#111827;line-height:1;white-space:nowrap;letter-spacing:0px">ETG3</div><div class="abs" style="left:2579.0px;top:1645.0px;font-size:22.5px;font-weight:400;color:#111827;line-height:1;white-space:nowrap;letter-spacing:0px">37</div><div class="abs" style="left:3262.0px;top:1645.0px;font-size:22.5px;font-weight:400;color:#111827;line-height:1;white-space:nowrap;letter-spacing:0px">Chambre</div><div class="abs" style="left:547.5px;top:1703.0px;width:31px;height:31px;border:2.5px solid #6b7280;border-radius:5px;background:#fff"></div><div class="abs" style="left:639px;top:1721.5px;width:7px;height:2px;background:#d1d5db"></div><svg class="abs" style="left:745.6px;top:1702.1px" width="34.8" height="34.8" viewBox="0 0 24 24" fill="none" stroke="#2563eb" stroke-width="2" stroke-linecap="round" stroke-linejoin="round"><circle cx="12" cy="12" r="10"/><line x1="22" x2="18" y1="12" y2="12"/><line x1="6" x2="2" y1="12" y2="12"/><line x1="12" x2="12" y1="6" y2="2"/><line x1="12" x2="12" y1="22" y2="18"/></svg><div class="abs" style="left:837.0px;top:1710.5px;font-size:22.5px;font-weight:400;color:#111827;line-height:1;white-space:nowrap;letter-spacing:0px">34.51</div><div class="abs" style="left:1056.0px;top:1710.5px;font-size:22.5px;font-weight:400;color:#111827;line-height:1;white-space:nowrap;letter-spacing:0px">105.26</div><div class="abs" style="left:1330.5px;top:1704.5px;width:31px;height:31px;border:2px solid #d1d5db;border-radius:7px;background:#dc2626"></div><div class="abs" style="left:1371.0px;top:1710.5px;font-size:22.5px;font-weight:400;color:#111827;line-height:1;white-space:nowrap;letter-spacing:0px">HNF</div><div class="abs" style="left:1939.5px;top:1710.5px;font-size:22.5px;font-weight:400;color:#111827;line-height:1;white-space:nowrap;letter-spacing:0px">AO</div><div class="abs" style="left:2337.0px;top:1710.5px;font-size:22.5px;font-weight:400;color:#111827;line-height:1;white-space:nowrap;letter-spacing:0px">ETG3</div><div class="abs" style="left:2579.0px;top:1710.5px;font-size:22.5px;font-weight:400;color:#111827;line-height:1;white-space:nowrap;letter-spacing:0px">11</div><div class="abs" style="left:3262.0px;top:1710.5px;font-size:22.5px;font-weight:400;color:#111827;line-height:1;white-space:nowrap;letter-spacing:0px">Chambre</div><div class="abs" style="left:547.5px;top:1768.5px;width:31px;height:31px;border:2.5px solid #6b7280;border-radius:5px;background:#fff"></div><div class="abs" style="left:639px;top:1787.0px;width:7px;height:2px;background:#d1d5db"></div><svg class="abs" style="left:745.6px;top:1767.6px" width="34.8" height="34.8" viewBox="0 0 24 24" fill="none" stroke="#2563eb" stroke-width="2" stroke-linecap="round" stroke-linejoin="round"><circle cx="12" cy="12" r="10"/><line x1="22" x2="18" y1="12" y2="12"/><line x1="6" x2="2" y1="12" y2="12"/><line x1="12" x2="12" y1="6" y2="2"/><line x1="12" x2="12" y1="22" y2="18"/></svg><div class="abs" style="left:837.0px;top:1776.0px;font-size:22.5px;font-weight:400;color:#111827;line-height:1;white-space:nowrap;letter-spacing:0px">28.59</div><div class="abs" style="left:1056.0px;top:1776.0px;font-size:22.5px;font-weight:400;color:#111827;line-height:1;white-space:nowrap;letter-spacing:0px">87.20</div><div class="abs" style="left:1330.5px;top:1770.0px;width:31px;height:31px;border:2px solid #d1d5db;border-radius:7px;background:#eab308"></div><div class="abs" style="left:1371.0px;top:1776.0px;font-size:22.5px;font-weight:400;color:#111827;line-height:1;white-space:nowrap;letter-spacing:0px">VF</div><div class="abs" style="left:1939.5px;top:1776.0px;font-size:22.5px;font-weight:400;color:#111827;line-height:1;white-space:nowrap;letter-spacing:0px">AO</div><div class="abs" style="left:2337.0px;top:1776.0px;font-size:22.5px;font-weight:400;color:#111827;line-height:1;white-space:nowrap;letter-spacing:0px">ETG3</div><div class="abs" style="left:2579.0px;top:1776.0px;font-size:22.5px;font-weight:400;color:#111827;line-height:1;white-space:nowrap;letter-spacing:0px">23</div><div class="abs" style="left:3262.0px;top:1776.0px;font-size:22.5px;font-weight:400;color:#111827;line-height:1;white-space:nowrap;letter-spacing:0px">couloir</div><div class="abs" style="left:547.5px;top:1834.0px;width:31px;height:31px;border:2.5px solid #6b7280;border-radius:5px;background:#fff"></div><div class="abs" style="left:639px;top:1852.5px;width:7px;height:2px;background:#d1d5db"></div><svg class="abs" style="left:745.6px;top:1833.1px" width="34.8" height="34.8" viewBox="0 0 24 24" fill="none" stroke="#2563eb" stroke-width="2" stroke-linecap="round" stroke-linejoin="round"><circle cx="12" cy="12" r="10"/><line x1="22" x2="18" y1="12" y2="12"/><line x1="6" x2="2" y1="12" y2="12"/><line x1="12" x2="12" y1="6" y2="2"/><line x1="12" x2="12" y1="22" y2="18"/></svg><div class="abs" style="left:837.0px;top:1841.5px;font-size:22.5px;font-weight:400;color:#111827;line-height:1;white-space:nowrap;letter-spacing:0px">18.09</div><div class="abs" style="left:1056.0px;top:1841.5px;font-size:22.5px;font-weight:400;color:#111827;line-height:1;white-space:nowrap;letter-spacing:0px">55.16</div><div class="abs" style="left:1330.5px;top:1835.5px;width:31px;height:31px;border:2px solid #d1d5db;border-radius:7px;background:#dc2626"></div><div class="abs" style="left:1371.0px;top:1841.5px;font-size:22.5px;font-weight:400;color:#111827;line-height:1;white-space:nowrap;letter-spacing:0px">HNF</div><div class="abs" style="left:1939.5px;top:1841.5px;font-size:22.5px;font-weight:400;color:#111827;line-height:1;white-space:nowrap;letter-spacing:0px">AO</div><div class="abs" style="left:2337.0px;top:1841.5px;font-size:22.5px;font-weight:400;color:#111827;line-height:1;white-space:nowrap;letter-spacing:0px">ETG3</div><div class="abs" style="left:2579.0px;top:1841.5px;font-size:22.5px;font-weight:400;color:#111827;line-height:1;white-space:nowrap;letter-spacing:0px">41</div><div class="abs" style="left:3262.0px;top:1841.5px;font-size:22.5px;font-weight:400;color:#111827;line-height:1;white-space:nowrap;letter-spacing:0px">Chambre of/sof sup</div></div></div>
<div class="abs" style="left:547.0px;top:1874.5px;font-size:22.5px;font-weight:700;color:#111827;line-height:1;white-space:nowrap;letter-spacing:0px">0</div>
<div class="abs" style="left:836.0px;top:1874.5px;font-size:22.5px;font-weight:700;color:#111827;line-height:1;white-space:nowrap;letter-spacing:0px">37085.93</div>
<div class="abs" style="left:1056.0px;top:1874.5px;font-size:22.5px;font-weight:700;color:#111827;line-height:1;white-space:nowrap;letter-spacing:0px">128184.59</div>
<div class="abs" style="left:1330.0px;top:1874.5px;font-size:22.5px;font-weight:700;color:#111827;line-height:1;white-space:nowrap;letter-spacing:0px">6 unique</div>
<div class="abs" style="left:1638.0px;top:1874.5px;font-size:22.5px;font-weight:700;color:#111827;line-height:1;white-space:nowrap;letter-spacing:0px">1 unique</div>
<div class="abs" style="left:1939.5px;top:1874.5px;font-size:22.5px;font-weight:700;color:#111827;line-height:1;white-space:nowrap;letter-spacing:0px">14 unique</div>
<div class="abs" style="left:2337.0px;top:1874.5px;font-size:22.5px;font-weight:700;color:#111827;line-height:1;white-space:nowrap;letter-spacing:0px">11 unique</div>
<div class="abs" style="left:2579.0px;top:1874.5px;font-size:22.5px;font-weight:700;color:#111827;line-height:1;white-space:nowrap;letter-spacing:0px">64 unique</div>
<div class="abs" style="left:2931.0px;top:1874.5px;font-size:22.5px;font-weight:700;color:#111827;line-height:1;white-space:nowrap;letter-spacing:0px">858 unique</div>
<div class="abs" style="left:3262.0px;top:1874.5px;font-size:22.5px;font-weight:700;color:#111827;line-height:1;white-space:nowrap;letter-spacing:0px">296 unique</div>
<div class="abs" style="left:3787px;top:1564px;width:38px;height:345px;background:#fff"></div>
<svg class="abs" style="left:3787px;top:1564px" width="38" height="345"><path d="M10 31 L19 20 L28 31 Z" fill="#a3a3a3" stroke="#a3a3a3" stroke-width="2" stroke-linejoin="round"/><rect x="9" y="44" width="19" height="43" rx="9.5" fill="#a3a3a3"/><path d="M10 316 L19 327 L28 316 Z" fill="#a3a3a3" stroke="#a3a3a3" stroke-width="2" stroke-linejoin="round"/></svg>
<div id="foot" class="abs"></div>
<div class="abs" style="left:19.5px;top:1933.9px;font-size:23.7px;font-weight:400;color:#6b7280;line-height:1;white-space:nowrap;letter-spacing:0px">Copyright © 2026 ioLabs AG</div>
<div class="abs" style="left:355.5px;top:1936px;width:2px;height:24px;background:#6b7280"></div>
<div class="abs" style="left:393.0px;top:1934.3px;font-size:23.3px;font-weight:400;color:#6b7280;line-height:1;white-space:nowrap;letter-spacing:0px">Powered by ioFramework</div>
<div class="abs" style="left:1905.0px;top:1931.9px;font-size:23.7px;font-weight:400;color:#6b7280;line-height:1;white-space:nowrap;letter-spacing:0px">Made with</div>
<svg class="abs" style="left:2027.5px;top:1925.5px" width="35.0" height="35.0" viewBox="0 0 24 24" fill="none" stroke="#ef4444" stroke-width="2" stroke-linecap="round" stroke-linejoin="round"><path d="M19 14c1.49-1.46 3-3.21 3-5.5A5.5 5.5 0 0 0 16.5 3c-1.76 0-3 .5-4.5 2-1.5-1.5-2.74-2-4.5-2A5.5 5.5 0 0 0 2 8.5c0 2.3 1.5 4.05 3 5.5l7 7Z"/></svg>
<div class="abs" style="left:2077.0px;top:1932.5px;font-size:23px;font-weight:400;color:#6b7280;line-height:1;white-space:nowrap;letter-spacing:0px">in Switzerland</div>
<div class="abs" style="left:3468.0px;top:1934.8px;font-size:22.7px;font-weight:400;color:#6b7280;line-height:1;white-space:nowrap;letter-spacing:0px">Version 1.0.0</div>
<div class="abs" style="left:3631.0px;top:1923.7px;font-size:37px;font-weight:700;color:#000;line-height:1;white-space:nowrap;letter-spacing:0px">_ioLabs</div>
<div class="abs" style="left:3773px;top:1935px;width:21px;height:21px;background:#e3001b"></div><div class="abs" style="left:3781.5px;top:1939px;width:4px;height:13px;background:#fff"></div><div class="abs" style="left:3777px;top:1943.5px;width:13px;height:4px;background:#fff"></div>
</body></html>
